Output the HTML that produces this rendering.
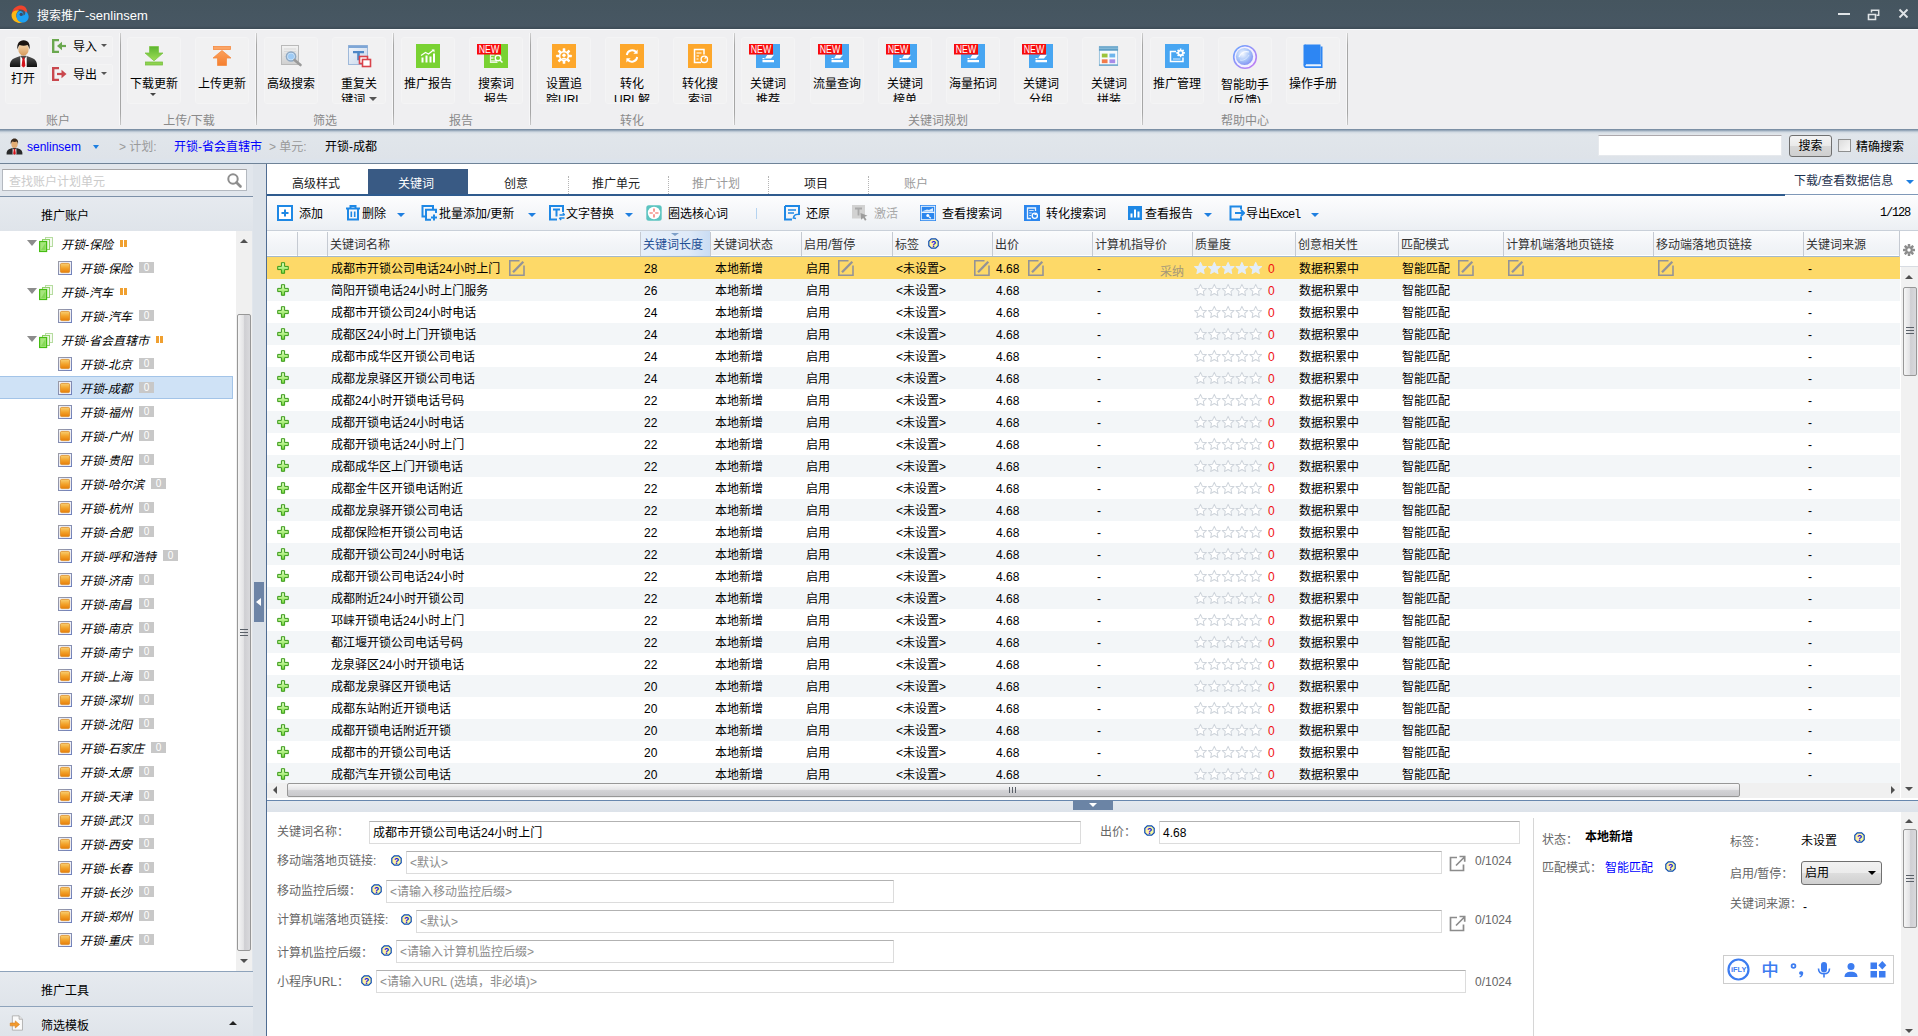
<!DOCTYPE html><html lang="zh-CN"><head><meta charset="utf-8"><title>搜索推广-senlinsem</title>
<style>html,body{margin:0;padding:0;}
body{width:1918px;height:1036px;overflow:hidden;background:#fff;
 font-family:"Liberation Sans","Noto Sans CJK SC",sans-serif;font-size:12px;color:#000;line-height:16px;}
#app{position:relative;width:1918px;height:1036px;overflow:hidden;background:#fff;}
.abs{position:absolute;}
svg{display:block;}
.nw{white-space:nowrap;}
/* title bar */
#title{position:absolute;left:0;top:0;width:1918px;height:29px;background:linear-gradient(#45555f,#475763 26px,#3f4e59 28px,#3d4c57);}
#title .t{position:absolute;left:37px;top:7px;color:#fff;font-size:12px;line-height:17px;white-space:nowrap;}
/* ribbon */
#ribbon{position:absolute;left:0;top:29px;width:1918px;height:100px;background:linear-gradient(#f9fbfc 0 1px,#efeff1 1px);}
#ribshadow{position:absolute;z-index:2;left:0;top:129px;width:1918px;height:5px;background:linear-gradient(#74889e 0,#8397ac 1px,#b4c1ce 2.2px,#d3dbe3 3.5px,#e0e5ea 5px);}
.rsep{position:absolute;top:4px;width:1px;height:92px;background:linear-gradient(#d0d0d0,#a6a6a6 12px,#a6a6a6 80px,#c8c8c8);box-shadow:-1px 0 0 #f7f7f8;}
.rgl{position:absolute;top:84px;height:16px;line-height:16px;color:#8a8a8a;font-size:12px;text-align:center;width:120px;margin-left:-60px;white-space:nowrap;}
.rb{position:absolute;top:8px;width:52px;height:65px;border:1px solid #f4f4f5;border-radius:3px;background:#f1f1f2;overflow:hidden;}
.rb .ic{position:absolute;left:0;top:0;width:54px;height:40px;}
.rb .lb{position:absolute;left:-11px;width:74px;top:38px;height:25.5px;overflow:hidden;text-align:center;font-size:12px;line-height:16px;color:#000;white-space:nowrap;}
.rs{position:absolute;left:48px;width:63px;height:19px;border:1px solid #f4f4f5;border-radius:2px;background:#f1f1f2;}
.rs span{position:absolute;left:24px;top:2px;line-height:16px;}
.dd{position:absolute;width:0;height:0;border-left:3.5px solid transparent;border-right:3.5px solid transparent;border-top:3.5px solid #444;}
/* crumb */
#crumb{position:absolute;left:0;top:132px;width:1918px;height:31px;background:linear-gradient(#e1e6eb,#dee3e9 85%,#d9e4f0);}
#crumbline{position:absolute;left:0;top:163px;width:1918px;height:1px;background:#6f8398;}
#crumb .c{position:absolute;top:7px;line-height:16px;white-space:nowrap;font-size:12px;}
/* left */
#left{position:absolute;left:0;top:164px;width:253px;height:872px;background:#e1e6ec;}
#split{position:absolute;left:253px;top:164px;width:13px;height:872px;background:#dce2e9;}
#mainborder{position:absolute;left:266px;top:164px;width:1px;height:872px;background:#4f6c92;}
.trow{position:absolute;left:0;width:236px;height:24px;}
.trow .tx{position:absolute;top:4px;line-height:16px;font-style:italic;white-space:nowrap;color:#000;}
.badge{position:absolute;width:15px;height:11px;background:#c6c6c6;color:#fff;font-size:10px;line-height:11px;text-align:center;font-style:normal;}
/* main */
#main{position:absolute;left:267px;top:164px;width:1651px;height:872px;background:#fff;}
.tab{position:absolute;top:7px;height:23px;line-height:27px;text-align:center;width:100px;font-size:12px;}
.tb{position:absolute;top:5px;line-height:16px;white-space:nowrap;font-size:12px;font-family:"Liberation Serif","Noto Serif CJK SC",serif;}
.th{position:absolute;top:0;height:25px;line-height:25px;white-space:nowrap;color:#333;}
.row{position:absolute;left:0;width:1633px;height:22px;}
.row span{position:absolute;top:1px;line-height:22px;white-space:nowrap;}
.lab{position:absolute;line-height:16px;white-space:nowrap;color:#555;}
.inp{position:absolute;height:23px;border:1px solid #dcdcdc;border-top-color:#b2b2b2;background:#fff;box-sizing:border-box;line-height:22px;padding-left:3px;white-space:nowrap;overflow:hidden;}
.ph{color:#8c8c8c;}
</style></head><body>
<div id="app">
<div id="title">
<svg class="abs" style="left:10px;top:4px" width="20" height="20" viewBox="0 0 20 20">
<path d="M2.200 12.500C1 8 3.500 3.200 8.500 1.800c4.500-1.200 8 1.200 8.600 5 .3 2-.2 3.600-1.200 4.600.2-3-1.800-5.600-5-5.800C7 5.400 4 8 2.200 12.500z" fill="#f0442c"/>
<path d="M1.800 9.500C.8 13 3 17.500 7.800 18.700c2 .5 3.800.2 5.200-.6-3.400-.2-6-2.400-6.600-5.400-.5-2.600.6-5 2.600-6.400C5.800 6 3 7.200 1.800 9.500z" fill="#fbb713"/>
<path d="M6.600 13.200c.4 3.200 3.400 5.600 7 5.200 3.400-.4 5.400-3.200 5-6.400-.3-2.400-1.600-4-3.400-4.800.6 2-.2 3.800-1.800 4.400.4-2.400-1-4.600-3.400-4.600-2.300.1-3.800 2.800-3.400 6.200z" fill="#1da1f2"/>
<circle cx="11.200" cy="10.400" r="1.700" fill="#3a4a66"/>
</svg>
<div class="t">搜索推广<span style="font-size:13px">-senlinsem</span></div>
<svg class="abs" style="left:1830px;top:5px" width="88" height="20" viewBox="0 0 88 20">
<rect x="8" y="8" width="12" height="2" fill="#e0e4e7"/>
<path d="M38.5 9.5h7v5h-7z" fill="none" stroke="#e0e4e7" stroke-width="1.6"/>
<path d="M41.5 7.5v-2.3h7.2v5h-2.2" fill="none" stroke="#e0e4e7" stroke-width="1.5"/>
<path d="M69.5 4.5l8 8M77.5 4.5l-8 8" stroke="#e0e4e7" stroke-width="1.9" fill="none"/>
</svg>
</div>
<div id="ribbon">
<div class="rb" style="left:5px;width:34px"><svg class="abs" style="left:3px;top:1px" width="29" height="29" viewBox="0 0 29 29">
<defs><linearGradient id="su" x1="0" y1="0" x2="0" y2="1"><stop offset="0" stop-color="#555"/><stop offset="1" stop-color="#111"/></linearGradient>
<linearGradient id="fa" x1="0" y1="0" x2="0" y2="1"><stop offset="0" stop-color="#f6d9b0"/><stop offset="1" stop-color="#d79a5c"/></linearGradient></defs>
<path d="M1 28c-.6-5.5 2-8.5 7.5-10l3.5-1.3h5l3.5 1.3c5.500 1.500 8.100 4.500 7.500 10z" fill="url(#su)"/>
<path d="M11.300 17l3.200 4 3.200-4v11h-6.400z" fill="#fff"/>
<path d="M13.600 18.500h1.800l1 8.500-1.900 1.500-1.900-1.500z" fill="#d3131b"/>
<ellipse cx="14.500" cy="10.300" rx="5.200" ry="6.400" fill="url(#fa)"/>
<path d="M8.600 10.500c-1.200-5.500 1.600-9.300 6-9.300 4.600 0 7 3.800 5.800 9.300-.4-2.400-1-3.600-2-4.500-2.400 1-5.600.8-7.800 0-1 .9-1.600 2.100-2 4.500z" fill="#1b1411"/>
</svg><div class="lb" style="left:-20px;top:33px">打开</div></div>
<div class="rs" style="top:7px"><svg class="abs" style="left:3px;top:2px" width="15" height="14" viewBox="0 0 15 14"><path d="M7 1H1.200v12H7" fill="none" stroke="#6aa84f" stroke-width="2.400"/><path d="M14 7H9" stroke="#6aa84f" stroke-width="2.200"/><path d="M10 2.800v8.400L5 7z" fill="#6aa84f"/></svg><span>导入</span><div class="dd" style="left:52px;top:7px;border-top-color:#555"></div></div>
<div class="rs" style="top:35px"><svg class="abs" style="left:3px;top:2px" width="15" height="14" viewBox="0 0 15 14"><path d="M7 1H1.200v12H7" fill="none" stroke="#c9474d" stroke-width="2.400"/><path d="M5 7h5" stroke="#c9474d" stroke-width="2.200"/><path d="M9.500 2.800v8.400L14.500 7z" fill="#c9474d"/></svg><span>导出</span><div class="dd" style="left:52px;top:7px;border-top-color:#555"></div></div>
<div class="rb" style="left:127px">
<svg class="abs" style="left:16px;top:7px" width="20" height="22" viewBox="0 0 20 22">
<defs><linearGradient id="gd" x1="0" y1="0" x2="0" y2="1"><stop offset="0" stop-color="#5cb531"/><stop offset="1" stop-color="#9ede55"/></linearGradient></defs>
<path d="M5.500 1.500h9v6.500h4.500l-9 7.800-9-7.800h4.500z" fill="url(#gd)" stroke="#7dc548" stroke-width=".8"/>
<rect x="1.500" y="17" width="17" height="3" fill="#8ed24f" stroke="#79c043" stroke-width=".8"/></svg>
<div class="lb" style="top:38px">下载更新</div>
<div class="dd" style="left:22px;top:55px;border-top-color:#444"></div>
</div>
<div class="rb" style="left:195px">
<svg class="abs" style="left:16px;top:7px" width="20" height="22" viewBox="0 0 20 22">
<defs><linearGradient id="gu" x1="0" y1="0" x2="0" y2="1"><stop offset="0" stop-color="#fba05d"/><stop offset="1" stop-color="#f57f2e"/></linearGradient></defs>
<rect x="1.500" y="1.500" width="17" height="3" fill="#fba566" stroke="#f58b41" stroke-width=".8"/>
<path d="M10 5.500l9 7.500h-4.500v7.500h-9v-7.500h-4.500z" fill="url(#gu)" stroke="#f58b41" stroke-width=".8"/></svg>
<div class="lb" style="top:38px">上传更新</div>
</div>
<div class="rb" style="left:264px">
<svg class="abs" style="left:14px;top:6px" width="26" height="24" viewBox="0 0 26 24">
<defs><linearGradient id="pg" x1="0" y1="0" x2="0" y2="1"><stop offset="0" stop-color="#f4f4f4"/><stop offset="1" stop-color="#cfcfcf"/></linearGradient></defs>
<rect x="2.500" y="1.500" width="17" height="19" fill="url(#pg)" stroke="#b9b9b9"/>
<path d="M5 5h12M5 7.500h12M5 10h12M5 12.500h12" stroke="#d9d9d9" stroke-width="1"/>
<circle cx="12" cy="12.500" r="4.600" fill="#cfe6fb" stroke="#8fa9c4" stroke-width="1.500"/>
<circle cx="12" cy="12.500" r="3" fill="#9ecbf5"/>
<path d="M15.500 16l6 5" stroke="#9a9a9a" stroke-width="2.600" stroke-linecap="round"/></svg>
<div class="lb" style="top:38px">高级搜索</div>
</div>
<div class="rb" style="left:332px">
<svg class="abs" style="left:14px;top:6px" width="26" height="24" viewBox="0 0 26 24">
<defs><linearGradient id="dg" x1="0" y1="0" x2="1" y2="1"><stop offset="0" stop-color="#f2f6fb"/><stop offset="1" stop-color="#c7d6ea"/></linearGradient></defs>
<rect x="1.500" y="1.500" width="19" height="19" fill="url(#dg)" stroke="#9fb9da"/>
<rect x="1.500" y="1.500" width="19" height="2.500" fill="#7ea6d6"/>
<path d="M6 7h11v2.300H12.800v7H10.200v-7H6z" fill="#4d86c6"/>
<rect x="12.500" y="12.500" width="8" height="7" fill="#fff" stroke="#d9434b" stroke-width="1.600"/>
<rect x="15.500" y="15.500" width="8" height="7" fill="#fff" stroke="#d9434b" stroke-width="1.600"/></svg>
<div class="lb" style="top:38px">重复关<br>键词&nbsp;<span style="display:inline-block;width:0;height:0;border-left:4px solid transparent;border-right:4px solid transparent;border-top:4px solid #555;vertical-align:3px"></span></div>
</div>
<div class="rb" style="left:401px">
<svg class="abs" style="left:14px;top:6px;overflow:visible" width="24" height="24" viewBox="0 0 24 24"><rect width="24" height="24" fill="#79d232"/><path d="M5.5 18.5v-5h2v5zM9.5 18.5v-7h2v7zM13.5 18.5v-6h2v6zM17 18.5v-9h2v9z" fill="#fff"/><path d="M5 11.5l4.5-3 3 1.5 5-4" stroke="#fff" stroke-width="1.2" fill="none"/><path d="M15.5 5.5h3v3z" fill="#fff"/></svg>
<div class="lb" style="top:38px">推广报告</div>
</div>
<div class="rb" style="left:469px">
<svg class="abs" style="left:14px;top:6px;overflow:visible" width="24" height="24" viewBox="0 0 24 24"><rect width="24" height="24" fill="#79d232"/><path d="M7 11h3.5M7 14h2.5M7 17h6" stroke="#e9f7dd" stroke-width="1.4"/><path d="M6.5 9.5v9h7" stroke="#e9f7dd" stroke-width="1.2" fill="none"/><circle cx="14" cy="14" r="2.8" fill="none" stroke="#fff" stroke-width="1.4"/><path d="M16 16l2.5 2.5" stroke="#fff" stroke-width="1.5"/><rect x="-7" y="0" width="24" height="10.500" fill="#f80c0c"/><text x="5" y="9.300" font-size="10" fill="#fff" text-anchor="middle" font-family="Liberation Sans, sans-serif" textLength="20.500" lengthAdjust="spacingAndGlyphs">NEW</text></svg>
<div class="lb" style="top:38px">搜索词<br>报告</div>
</div>
<div class="rb" style="left:537px">
<svg class="abs" style="left:14px;top:6px;overflow:visible" width="24" height="24" viewBox="0 0 24 24"><rect width="24" height="24" fill="#fda72b"/><g fill="#fff"><circle cx="12" cy="12" r="5.2"/><g id="t"><rect x="10.7" y="4.2" width="2.6" height="3.2" rx=".6"/><rect x="10.7" y="16.6" width="2.6" height="3.2" rx=".6"/></g><use href="#t" transform="rotate(45 12 12)"/><use href="#t" transform="rotate(90 12 12)"/><use href="#t" transform="rotate(135 12 12)"/></g><circle cx="12" cy="12" r="3.6" fill="#fda72b"/><circle cx="12" cy="11.3" r="1.7" fill="#fff"/><path d="M9.2 15.3c.6-2 5-2 5.6 0z" fill="#fff"/></svg>
<div class="lb" style="top:38px">设置追<br>踪URL</div>
</div>
<div class="rb" style="left:605px">
<svg class="abs" style="left:14px;top:6px;overflow:visible" width="24" height="24" viewBox="0 0 24 24"><rect width="24" height="24" fill="#fda72b"/><path d="M6.8 11a5.4 5.4 0 0 1 9.6-2.6" fill="none" stroke="#fff" stroke-width="1.9"/><path d="M17.6 5.6v4.2h-4.2z" fill="#fff"/><path d="M17.2 13a5.4 5.4 0 0 1-9.6 2.6" fill="none" stroke="#fff" stroke-width="1.9"/><path d="M6.4 18.4v-4.2h4.2z" fill="#fff"/></svg>
<div class="lb" style="top:38px">转化<br>URL解</div>
</div>
<div class="rb" style="left:673px">
<svg class="abs" style="left:14px;top:6px;overflow:visible" width="24" height="24" viewBox="0 0 24 24"><rect width="24" height="24" fill="#fda72b"/><path d="M13 18.5H6.5v-13h9.5v5" fill="none" stroke="#fff" stroke-width="1.5"/><path d="M8.5 9h5M8.5 12h2.5M8.5 15h2" stroke="#ffe6bf" stroke-width="1.3"/><circle cx="16.3" cy="15.3" r="3.2" fill="none" stroke="#fff" stroke-width="1.4"/><path d="M18.3 12.2v2.4h-2.4z" fill="#fff"/></svg>
<div class="lb" style="top:38px">转化搜<br>索词</div>
</div>
<div class="rb" style="left:741px">
<svg class="abs" style="left:14px;top:6px;overflow:visible" width="24" height="24" viewBox="0 0 24 24"><rect width="24" height="24" fill="#48a6f2"/><path d="M6.5 18.3h11.5v-2.2H6.5z" fill="#fff"/><path d="M9 14.6l2.2-3.6 6.8-.3-3 3.9z" fill="#fff"/><path d="M6.5 14.6h2" stroke="#fff" stroke-width="1.2"/><rect x="-7" y="0" width="24" height="10.500" fill="#f80c0c"/><text x="5" y="9.300" font-size="10" fill="#fff" text-anchor="middle" font-family="Liberation Sans, sans-serif" textLength="20.500" lengthAdjust="spacingAndGlyphs">NEW</text></svg>
<div class="lb" style="top:38px">关键词<br>推荐</div>
</div>
<div class="rb" style="left:810px">
<svg class="abs" style="left:14px;top:6px;overflow:visible" width="24" height="24" viewBox="0 0 24 24"><rect width="24" height="24" fill="#48a6f2"/><path d="M6.5 18.3h11.5v-2.2H6.5z" fill="#fff"/><path d="M9 14.6l2.2-3.6 6.8-.3-3 3.9z" fill="#fff"/><path d="M6.5 14.6h2" stroke="#fff" stroke-width="1.2"/><rect x="-7" y="0" width="24" height="10.500" fill="#f80c0c"/><text x="5" y="9.300" font-size="10" fill="#fff" text-anchor="middle" font-family="Liberation Sans, sans-serif" textLength="20.500" lengthAdjust="spacingAndGlyphs">NEW</text></svg>
<div class="lb" style="top:38px">流量查询</div>
</div>
<div class="rb" style="left:878px">
<svg class="abs" style="left:14px;top:6px;overflow:visible" width="24" height="24" viewBox="0 0 24 24"><rect width="24" height="24" fill="#48a6f2"/><path d="M6.5 18.3h11.5v-2.2H6.5z" fill="#fff"/><path d="M9 14.6l2.2-3.6 6.8-.3-3 3.9z" fill="#fff"/><path d="M6.5 14.6h2" stroke="#fff" stroke-width="1.2"/><rect x="-7" y="0" width="24" height="10.500" fill="#f80c0c"/><text x="5" y="9.300" font-size="10" fill="#fff" text-anchor="middle" font-family="Liberation Sans, sans-serif" textLength="20.500" lengthAdjust="spacingAndGlyphs">NEW</text></svg>
<div class="lb" style="top:38px">关键词<br>榜单</div>
</div>
<div class="rb" style="left:946px">
<svg class="abs" style="left:14px;top:6px;overflow:visible" width="24" height="24" viewBox="0 0 24 24"><rect width="24" height="24" fill="#48a6f2"/><path d="M6.5 18.3h11.5v-2.2H6.5z" fill="#fff"/><path d="M9 14.6l2.2-3.6 6.8-.3-3 3.9z" fill="#fff"/><path d="M6.5 14.6h2" stroke="#fff" stroke-width="1.2"/><rect x="-7" y="0" width="24" height="10.500" fill="#f80c0c"/><text x="5" y="9.300" font-size="10" fill="#fff" text-anchor="middle" font-family="Liberation Sans, sans-serif" textLength="20.500" lengthAdjust="spacingAndGlyphs">NEW</text></svg>
<div class="lb" style="top:38px">海量拓词</div>
</div>
<div class="rb" style="left:1014px">
<svg class="abs" style="left:14px;top:6px;overflow:visible" width="24" height="24" viewBox="0 0 24 24"><rect width="24" height="24" fill="#48a6f2"/><path d="M6.5 18.3h11.5v-2.2H6.5z" fill="#fff"/><path d="M9 14.6l2.2-3.6 6.8-.3-3 3.9z" fill="#fff"/><path d="M6.5 14.6h2" stroke="#fff" stroke-width="1.2"/><rect x="-7" y="0" width="24" height="10.500" fill="#f80c0c"/><text x="5" y="9.300" font-size="10" fill="#fff" text-anchor="middle" font-family="Liberation Sans, sans-serif" textLength="20.500" lengthAdjust="spacingAndGlyphs">NEW</text></svg>
<div class="lb" style="top:38px">关键词<br>分组</div>
</div>
<div class="rb" style="left:1082px">
<svg class="abs" style="left:15px;top:7px" width="21" height="22" viewBox="0 0 22 22">
<rect x="1.500" y="1" width="19" height="19.500" fill="#f7fafc" stroke="#9cc3dc"/>
<rect x="1" y="1" width="20" height="4.500" fill="#5f9fc6"/><rect x="1" y="2.200" width="20" height="1.200" fill="#8fc0dd"/>
<rect x="4" y="8.500" width="6" height="4" fill="#9bc33b"/><rect x="12" y="8.500" width="6" height="4" fill="#6fb5ec"/>
<rect x="4" y="14.500" width="6" height="4" fill="#f37c4a"/><rect x="12" y="14.500" width="6" height="4" fill="#a78be8"/>
<path d="M1 20.500h20" stroke="#5f9fc6" stroke-width="1.400"/></svg>
<div class="lb" style="top:38px">关键词<br>拼装</div>
</div>
<div class="rb" style="left:1150px">
<svg class="abs" style="left:14px;top:6px;overflow:visible" width="24" height="24" viewBox="0 0 24 24"><rect width="24" height="24" fill="#48a6f2"/><path d="M11 7.5H5.5v10h12.5v-4" fill="none" stroke="#fff" stroke-width="1.5"/><path d="M8 15h7.5" stroke="#d8ecfd" stroke-width="1.2"/><circle cx="15.6" cy="8.9" r="3.1" fill="#fff"/><g stroke="#fff" stroke-width="1.6"><path d="M15.6 4.6v8.6M11.3 8.9h8.6M12.6 5.9l6 6M18.6 5.9l-6 6"/></g><circle cx="15.6" cy="8.9" r="1.4" fill="#48a6f2"/></svg>
<div class="lb" style="top:38px">推广管理</div>
</div>
<div class="rb" style="left:1218px">
<svg class="abs" style="left:13px;top:6px" width="26" height="26" viewBox="0 0 26 26">
<defs><radialGradient id="ag" cx=".4" cy=".35" r=".7"><stop offset="0" stop-color="#f4f8ff"/><stop offset=".55" stop-color="#a9c6f8"/><stop offset="1" stop-color="#7f8df2"/></radialGradient>
<linearGradient id="ar" x1="0" y1="0" x2="1" y2="1"><stop offset="0" stop-color="#6aa8ff"/><stop offset="1" stop-color="#c77bf2"/></linearGradient></defs>
<circle cx="13" cy="13" r="11.300" fill="#f3f0ff" stroke="url(#ar)" stroke-width="1.600"/>
<circle cx="12.500" cy="12.500" r="8.600" fill="url(#ag)"/>
<path d="M7 13c2-4 6-6 10-5" stroke="#fff" stroke-width="1.200" fill="none" opacity=".8"/>
<path d="M8 16c3 1 7-1 9-5" stroke="#dfeaff" stroke-width="1" fill="none" opacity=".8"/></svg>
<div class="lb" style="top:39px">智能助手<br>(反馈)</div>
</div>
<div class="rb" style="left:1286px">
<svg class="abs" style="left:15px;top:6px" width="22" height="25" viewBox="0 0 22 25">
<path d="M3 .5h15.500v19H3z" fill="#2d86f3"/><path d="M18.500 2.500h2v21.500H4.500c-2 0-3-1.200-3-2.600s1-2.400 3-2.400H18.500z" fill="#2d86f3"/>
<path d="M4.500 20.200h14.500v2H4.500c-.8 0-1.300-.4-1.300-1s.5-1 1.300-1z" fill="#e8f2ff"/>
<rect x="1.500" y=".5" width="2.500" height="21" rx="1" fill="#2d86f3"/></svg>
<div class="lb" style="top:38px">操作手册</div>
</div>
<div class="rsep" style="left:120px"></div>
<div class="rsep" style="left:256px"></div>
<div class="rsep" style="left:393px"></div>
<div class="rsep" style="left:530px"></div>
<div class="rsep" style="left:734px"></div>
<div class="rsep" style="left:1142px"></div>
<div class="rsep" style="left:1347px"></div>
<div class="rgl" style="left:58px">账户</div>
<div class="rgl" style="left:189px">上传/下载</div>
<div class="rgl" style="left:325px">筛选</div>
<div class="rgl" style="left:461px">报告</div>
<div class="rgl" style="left:632px">转化</div>
<div class="rgl" style="left:938px">关键词规划</div>
<div class="rgl" style="left:1245px">帮助中心</div>
</div><div id="ribshadow"></div>
<div id="crumb">
<svg class="abs" style="left:6px;top:6px" width="17" height="17" viewBox="0 0 29 29">
<path d="M1 28c-.6-5.500 2-8.500 7.500-10l3.500-1.300h5l3.500 1.300c5.500 1.500 8.100 4.500 7.500 10z" fill="#2a2a2a"/>
<path d="M11.300 17l3.200 4 3.200-4v11h-6.400z" fill="#fff"/><path d="M13.400 18.500h2.200l1.200 8.500-2.300 1.500-2.300-1.500z" fill="#d3131b"/>
<ellipse cx="14.500" cy="10.300" rx="5.400" ry="6.600" fill="#e3ad74"/>
<path d="M8.400 10.500c-1.200-5.500 1.600-9.500 6.100-9.500 4.700 0 7.100 4 5.900 9.500-.4-2.400-1-3.600-2-4.500-2.400 1-5.600.8-7.800 0-1 .9-1.600 2.100-2.200 4.500z" fill="#3b2a1c"/></svg>
<div class="c" style="left:27px;color:#0000ff">senlinsem</div>
<div class="dd" style="left:93px;top:13px;border-top-color:#1e7fe0;border-left-width:3.500px;border-right-width:3.500px;border-top-width:4px"></div>
<div class="c" style="left:119px;color:#9a9a9a">&gt; 计划:</div>
<div class="c" style="left:174px;color:#0000ff">开锁-省会直辖市</div>
<div class="c" style="left:269px;color:#9a9a9a">&gt; 单元:</div>
<div class="c" style="left:325px;color:#000">开锁-成都</div>
<div class="abs" style="left:1598px;top:3px;width:184px;height:21px;background:#fff;border:1px solid #e6e9ed;border-top-color:#aca8ac;box-sizing:border-box"></div>
<div class="abs" style="left:1789px;top:3px;width:43px;height:22px;box-sizing:border-box;border:1px solid #707070;border-radius:3px;background:linear-gradient(#f4f4f4,#e9e9e9 50%,#d8d8d8 51%,#cfcfcf);text-align:center;line-height:21px">搜索</div>
<div class="abs" style="left:1838px;top:7px;width:13px;height:13px;box-sizing:border-box;border:1px solid #8e8f8f;background:linear-gradient(135deg,#dcdcdc,#f8f8f8)"></div>
<div class="c" style="left:1856px;color:#000">精确搜索</div>
</div><div id="crumbline"></div>
<div id="left">
<div class="abs" style="left:2px;top:5px;width:245px;height:22px;box-sizing:border-box;background:#fff;border:1px solid #b4b9c0;border-top-color:#a6a6a8"></div>
<div class="abs nw" style="left:9px;top:10px;color:#cbcbcb;line-height:16px">查找账户计划单元</div>
<svg class="abs" style="left:226px;top:8px" width="17" height="17" viewBox="0 0 17 17"><circle cx="7" cy="7" r="4.700" fill="none" stroke="#8e8e8e" stroke-width="2"/><path d="M10.500 10.500l4 4" stroke="#8e8e8e" stroke-width="2.600" stroke-linecap="round"/></svg>
<div class="abs" style="left:0;top:32px;width:253px;height:1px;background:#7c90a8"></div>
<div class="abs" style="left:0;top:33px;width:253px;height:34px;background:linear-gradient(#e6eaef,#dfe4ea)"></div>
<div class="abs nw" style="left:41px;top:44px;line-height:16px;color:#000">推广账户</div>
<div class="abs" style="left:0;top:67px;width:252px;height:740px;background:#fff;overflow:hidden">
<div class="abs" style="left:27px;top:9px;width:0;height:0;border-left:5px solid transparent;border-right:5px solid transparent;border-top:6px solid #8c8c8c"></div>
<svg class="abs" style="left:39px;top:6px" width="15" height="16" viewBox="0 0 15 16"><rect x="6.500" y=".5" width="7" height="9" fill="#f4fbef" stroke="#b6dca0"/><rect x="3.500" y="2.500" width="7" height="10" fill="#eaf7e0" stroke="#8fd068"/><rect x=".6" y="4.500" width="7" height="10" fill="#a5e57c" stroke="#45bd12" stroke-width="1.200"/><path d="M2 13l4.500-7v7z" fill="#86d958"/></svg>
<div class="abs nw" style="left:61px;top:6px;line-height:16px"><i>开锁-保险</i><span style="display:inline-block;width:3px;height:7px;background:#f0a030;margin-left:7px;vertical-align:2px"></span><span style="display:inline-block;width:3px;height:7px;background:#f0a030;margin-left:1px;vertical-align:2px"></span></div>
<svg class="abs" style="left:58px;top:30px" width="14" height="14" viewBox="0 0 14 14"><defs><linearGradient id="ug" x1="0" y1="0" x2="0" y2="1"><stop offset="0" stop-color="#f9d074"/><stop offset=".5" stop-color="#f3a42c"/><stop offset="1" stop-color="#e67e0a"/></linearGradient><linearGradient id="ub" x1="0" y1="0" x2="1" y2="1"><stop offset="0" stop-color="#9c9ca6"/><stop offset="1" stop-color="#6f80bd"/></linearGradient></defs><rect x=".5" y=".5" width="13" height="13" fill="#eef1fa" stroke="url(#ub)"/><rect x="2.400" y="2.400" width="9.200" height="9.200" rx="1.300" fill="url(#ug)" stroke="#dd8a20" stroke-width=".8"/></svg>
<div class="abs nw" style="left:80px;top:30px;line-height:16px"><i>开锁-保险</i><span style="display:inline-block;width:15px;height:11px;background:#c8c8c8;color:#fff;font-size:10px;line-height:11px;text-align:center;margin-left:7px;vertical-align:2px">0</span></div>
<div class="abs" style="left:27px;top:57px;width:0;height:0;border-left:5px solid transparent;border-right:5px solid transparent;border-top:6px solid #8c8c8c"></div>
<svg class="abs" style="left:39px;top:54px" width="15" height="16" viewBox="0 0 15 16"><rect x="6.500" y=".5" width="7" height="9" fill="#f4fbef" stroke="#b6dca0"/><rect x="3.500" y="2.500" width="7" height="10" fill="#eaf7e0" stroke="#8fd068"/><rect x=".6" y="4.500" width="7" height="10" fill="#a5e57c" stroke="#45bd12" stroke-width="1.200"/><path d="M2 13l4.500-7v7z" fill="#86d958"/></svg>
<div class="abs nw" style="left:61px;top:54px;line-height:16px"><i>开锁-汽车</i><span style="display:inline-block;width:3px;height:7px;background:#f0a030;margin-left:7px;vertical-align:2px"></span><span style="display:inline-block;width:3px;height:7px;background:#f0a030;margin-left:1px;vertical-align:2px"></span></div>
<svg class="abs" style="left:58px;top:78px" width="14" height="14" viewBox="0 0 14 14"><rect x=".5" y=".5" width="13" height="13" fill="#eef1fa" stroke="url(#ub)"/><rect x="2.400" y="2.400" width="9.200" height="9.200" rx="1.300" fill="url(#ug)" stroke="#dd8a20" stroke-width=".8"/></svg>
<div class="abs nw" style="left:80px;top:78px;line-height:16px"><i>开锁-汽车</i><span style="display:inline-block;width:15px;height:11px;background:#c8c8c8;color:#fff;font-size:10px;line-height:11px;text-align:center;margin-left:7px;vertical-align:2px">0</span></div>
<div class="abs" style="left:27px;top:105px;width:0;height:0;border-left:5px solid transparent;border-right:5px solid transparent;border-top:6px solid #8c8c8c"></div>
<svg class="abs" style="left:39px;top:102px" width="15" height="16" viewBox="0 0 15 16"><rect x="6.500" y=".5" width="7" height="9" fill="#f4fbef" stroke="#b6dca0"/><rect x="3.500" y="2.500" width="7" height="10" fill="#eaf7e0" stroke="#8fd068"/><rect x=".6" y="4.500" width="7" height="10" fill="#a5e57c" stroke="#45bd12" stroke-width="1.200"/><path d="M2 13l4.500-7v7z" fill="#86d958"/></svg>
<div class="abs nw" style="left:61px;top:102px;line-height:16px"><i>开锁-省会直辖市</i><span style="display:inline-block;width:3px;height:7px;background:#f0a030;margin-left:7px;vertical-align:2px"></span><span style="display:inline-block;width:3px;height:7px;background:#f0a030;margin-left:1px;vertical-align:2px"></span></div>
<svg class="abs" style="left:58px;top:126px" width="14" height="14" viewBox="0 0 14 14"><rect x=".5" y=".5" width="13" height="13" fill="#eef1fa" stroke="url(#ub)"/><rect x="2.400" y="2.400" width="9.200" height="9.200" rx="1.300" fill="url(#ug)" stroke="#dd8a20" stroke-width=".8"/></svg>
<div class="abs nw" style="left:80px;top:126px;line-height:16px"><i>开锁-北京</i><span style="display:inline-block;width:15px;height:11px;background:#c8c8c8;color:#fff;font-size:10px;line-height:11px;text-align:center;margin-left:7px;vertical-align:2px">0</span></div>
<div class="abs" style="left:0;top:145px;width:233px;height:23px;box-sizing:border-box;background:#cfe2f6;border:1px solid #a3c4e8;border-left:none"></div>
<svg class="abs" style="left:58px;top:150px" width="14" height="14" viewBox="0 0 14 14"><rect x=".5" y=".5" width="13" height="13" fill="#eef1fa" stroke="url(#ub)"/><rect x="2.400" y="2.400" width="9.200" height="9.200" rx="1.300" fill="url(#ug)" stroke="#dd8a20" stroke-width=".8"/></svg>
<div class="abs nw" style="left:80px;top:150px;line-height:16px"><i>开锁-成都</i><span style="display:inline-block;width:15px;height:11px;background:#c8c8c8;color:#fff;font-size:10px;line-height:11px;text-align:center;margin-left:7px;vertical-align:2px">0</span></div>
<svg class="abs" style="left:58px;top:174px" width="14" height="14" viewBox="0 0 14 14"><rect x=".5" y=".5" width="13" height="13" fill="#eef1fa" stroke="url(#ub)"/><rect x="2.400" y="2.400" width="9.200" height="9.200" rx="1.300" fill="url(#ug)" stroke="#dd8a20" stroke-width=".8"/></svg>
<div class="abs nw" style="left:80px;top:174px;line-height:16px"><i>开锁-福州</i><span style="display:inline-block;width:15px;height:11px;background:#c8c8c8;color:#fff;font-size:10px;line-height:11px;text-align:center;margin-left:7px;vertical-align:2px">0</span></div>
<svg class="abs" style="left:58px;top:198px" width="14" height="14" viewBox="0 0 14 14"><rect x=".5" y=".5" width="13" height="13" fill="#eef1fa" stroke="url(#ub)"/><rect x="2.400" y="2.400" width="9.200" height="9.200" rx="1.300" fill="url(#ug)" stroke="#dd8a20" stroke-width=".8"/></svg>
<div class="abs nw" style="left:80px;top:198px;line-height:16px"><i>开锁-广州</i><span style="display:inline-block;width:15px;height:11px;background:#c8c8c8;color:#fff;font-size:10px;line-height:11px;text-align:center;margin-left:7px;vertical-align:2px">0</span></div>
<svg class="abs" style="left:58px;top:222px" width="14" height="14" viewBox="0 0 14 14"><rect x=".5" y=".5" width="13" height="13" fill="#eef1fa" stroke="url(#ub)"/><rect x="2.400" y="2.400" width="9.200" height="9.200" rx="1.300" fill="url(#ug)" stroke="#dd8a20" stroke-width=".8"/></svg>
<div class="abs nw" style="left:80px;top:222px;line-height:16px"><i>开锁-贵阳</i><span style="display:inline-block;width:15px;height:11px;background:#c8c8c8;color:#fff;font-size:10px;line-height:11px;text-align:center;margin-left:7px;vertical-align:2px">0</span></div>
<svg class="abs" style="left:58px;top:246px" width="14" height="14" viewBox="0 0 14 14"><rect x=".5" y=".5" width="13" height="13" fill="#eef1fa" stroke="url(#ub)"/><rect x="2.400" y="2.400" width="9.200" height="9.200" rx="1.300" fill="url(#ug)" stroke="#dd8a20" stroke-width=".8"/></svg>
<div class="abs nw" style="left:80px;top:246px;line-height:16px"><i>开锁-哈尔滨</i><span style="display:inline-block;width:15px;height:11px;background:#c8c8c8;color:#fff;font-size:10px;line-height:11px;text-align:center;margin-left:7px;vertical-align:2px">0</span></div>
<svg class="abs" style="left:58px;top:270px" width="14" height="14" viewBox="0 0 14 14"><rect x=".5" y=".5" width="13" height="13" fill="#eef1fa" stroke="url(#ub)"/><rect x="2.400" y="2.400" width="9.200" height="9.200" rx="1.300" fill="url(#ug)" stroke="#dd8a20" stroke-width=".8"/></svg>
<div class="abs nw" style="left:80px;top:270px;line-height:16px"><i>开锁-杭州</i><span style="display:inline-block;width:15px;height:11px;background:#c8c8c8;color:#fff;font-size:10px;line-height:11px;text-align:center;margin-left:7px;vertical-align:2px">0</span></div>
<svg class="abs" style="left:58px;top:294px" width="14" height="14" viewBox="0 0 14 14"><rect x=".5" y=".5" width="13" height="13" fill="#eef1fa" stroke="url(#ub)"/><rect x="2.400" y="2.400" width="9.200" height="9.200" rx="1.300" fill="url(#ug)" stroke="#dd8a20" stroke-width=".8"/></svg>
<div class="abs nw" style="left:80px;top:294px;line-height:16px"><i>开锁-合肥</i><span style="display:inline-block;width:15px;height:11px;background:#c8c8c8;color:#fff;font-size:10px;line-height:11px;text-align:center;margin-left:7px;vertical-align:2px">0</span></div>
<svg class="abs" style="left:58px;top:318px" width="14" height="14" viewBox="0 0 14 14"><rect x=".5" y=".5" width="13" height="13" fill="#eef1fa" stroke="url(#ub)"/><rect x="2.400" y="2.400" width="9.200" height="9.200" rx="1.300" fill="url(#ug)" stroke="#dd8a20" stroke-width=".8"/></svg>
<div class="abs nw" style="left:80px;top:318px;line-height:16px"><i>开锁-呼和浩特</i><span style="display:inline-block;width:15px;height:11px;background:#c8c8c8;color:#fff;font-size:10px;line-height:11px;text-align:center;margin-left:7px;vertical-align:2px">0</span></div>
<svg class="abs" style="left:58px;top:342px" width="14" height="14" viewBox="0 0 14 14"><rect x=".5" y=".5" width="13" height="13" fill="#eef1fa" stroke="url(#ub)"/><rect x="2.400" y="2.400" width="9.200" height="9.200" rx="1.300" fill="url(#ug)" stroke="#dd8a20" stroke-width=".8"/></svg>
<div class="abs nw" style="left:80px;top:342px;line-height:16px"><i>开锁-济南</i><span style="display:inline-block;width:15px;height:11px;background:#c8c8c8;color:#fff;font-size:10px;line-height:11px;text-align:center;margin-left:7px;vertical-align:2px">0</span></div>
<svg class="abs" style="left:58px;top:366px" width="14" height="14" viewBox="0 0 14 14"><rect x=".5" y=".5" width="13" height="13" fill="#eef1fa" stroke="url(#ub)"/><rect x="2.400" y="2.400" width="9.200" height="9.200" rx="1.300" fill="url(#ug)" stroke="#dd8a20" stroke-width=".8"/></svg>
<div class="abs nw" style="left:80px;top:366px;line-height:16px"><i>开锁-南昌</i><span style="display:inline-block;width:15px;height:11px;background:#c8c8c8;color:#fff;font-size:10px;line-height:11px;text-align:center;margin-left:7px;vertical-align:2px">0</span></div>
<svg class="abs" style="left:58px;top:390px" width="14" height="14" viewBox="0 0 14 14"><rect x=".5" y=".5" width="13" height="13" fill="#eef1fa" stroke="url(#ub)"/><rect x="2.400" y="2.400" width="9.200" height="9.200" rx="1.300" fill="url(#ug)" stroke="#dd8a20" stroke-width=".8"/></svg>
<div class="abs nw" style="left:80px;top:390px;line-height:16px"><i>开锁-南京</i><span style="display:inline-block;width:15px;height:11px;background:#c8c8c8;color:#fff;font-size:10px;line-height:11px;text-align:center;margin-left:7px;vertical-align:2px">0</span></div>
<svg class="abs" style="left:58px;top:414px" width="14" height="14" viewBox="0 0 14 14"><rect x=".5" y=".5" width="13" height="13" fill="#eef1fa" stroke="url(#ub)"/><rect x="2.400" y="2.400" width="9.200" height="9.200" rx="1.300" fill="url(#ug)" stroke="#dd8a20" stroke-width=".8"/></svg>
<div class="abs nw" style="left:80px;top:414px;line-height:16px"><i>开锁-南宁</i><span style="display:inline-block;width:15px;height:11px;background:#c8c8c8;color:#fff;font-size:10px;line-height:11px;text-align:center;margin-left:7px;vertical-align:2px">0</span></div>
<svg class="abs" style="left:58px;top:438px" width="14" height="14" viewBox="0 0 14 14"><rect x=".5" y=".5" width="13" height="13" fill="#eef1fa" stroke="url(#ub)"/><rect x="2.400" y="2.400" width="9.200" height="9.200" rx="1.300" fill="url(#ug)" stroke="#dd8a20" stroke-width=".8"/></svg>
<div class="abs nw" style="left:80px;top:438px;line-height:16px"><i>开锁-上海</i><span style="display:inline-block;width:15px;height:11px;background:#c8c8c8;color:#fff;font-size:10px;line-height:11px;text-align:center;margin-left:7px;vertical-align:2px">0</span></div>
<svg class="abs" style="left:58px;top:462px" width="14" height="14" viewBox="0 0 14 14"><rect x=".5" y=".5" width="13" height="13" fill="#eef1fa" stroke="url(#ub)"/><rect x="2.400" y="2.400" width="9.200" height="9.200" rx="1.300" fill="url(#ug)" stroke="#dd8a20" stroke-width=".8"/></svg>
<div class="abs nw" style="left:80px;top:462px;line-height:16px"><i>开锁-深圳</i><span style="display:inline-block;width:15px;height:11px;background:#c8c8c8;color:#fff;font-size:10px;line-height:11px;text-align:center;margin-left:7px;vertical-align:2px">0</span></div>
<svg class="abs" style="left:58px;top:486px" width="14" height="14" viewBox="0 0 14 14"><rect x=".5" y=".5" width="13" height="13" fill="#eef1fa" stroke="url(#ub)"/><rect x="2.400" y="2.400" width="9.200" height="9.200" rx="1.300" fill="url(#ug)" stroke="#dd8a20" stroke-width=".8"/></svg>
<div class="abs nw" style="left:80px;top:486px;line-height:16px"><i>开锁-沈阳</i><span style="display:inline-block;width:15px;height:11px;background:#c8c8c8;color:#fff;font-size:10px;line-height:11px;text-align:center;margin-left:7px;vertical-align:2px">0</span></div>
<svg class="abs" style="left:58px;top:510px" width="14" height="14" viewBox="0 0 14 14"><rect x=".5" y=".5" width="13" height="13" fill="#eef1fa" stroke="url(#ub)"/><rect x="2.400" y="2.400" width="9.200" height="9.200" rx="1.300" fill="url(#ug)" stroke="#dd8a20" stroke-width=".8"/></svg>
<div class="abs nw" style="left:80px;top:510px;line-height:16px"><i>开锁-石家庄</i><span style="display:inline-block;width:15px;height:11px;background:#c8c8c8;color:#fff;font-size:10px;line-height:11px;text-align:center;margin-left:7px;vertical-align:2px">0</span></div>
<svg class="abs" style="left:58px;top:534px" width="14" height="14" viewBox="0 0 14 14"><rect x=".5" y=".5" width="13" height="13" fill="#eef1fa" stroke="url(#ub)"/><rect x="2.400" y="2.400" width="9.200" height="9.200" rx="1.300" fill="url(#ug)" stroke="#dd8a20" stroke-width=".8"/></svg>
<div class="abs nw" style="left:80px;top:534px;line-height:16px"><i>开锁-太原</i><span style="display:inline-block;width:15px;height:11px;background:#c8c8c8;color:#fff;font-size:10px;line-height:11px;text-align:center;margin-left:7px;vertical-align:2px">0</span></div>
<svg class="abs" style="left:58px;top:558px" width="14" height="14" viewBox="0 0 14 14"><rect x=".5" y=".5" width="13" height="13" fill="#eef1fa" stroke="url(#ub)"/><rect x="2.400" y="2.400" width="9.200" height="9.200" rx="1.300" fill="url(#ug)" stroke="#dd8a20" stroke-width=".8"/></svg>
<div class="abs nw" style="left:80px;top:558px;line-height:16px"><i>开锁-天津</i><span style="display:inline-block;width:15px;height:11px;background:#c8c8c8;color:#fff;font-size:10px;line-height:11px;text-align:center;margin-left:7px;vertical-align:2px">0</span></div>
<svg class="abs" style="left:58px;top:582px" width="14" height="14" viewBox="0 0 14 14"><rect x=".5" y=".5" width="13" height="13" fill="#eef1fa" stroke="url(#ub)"/><rect x="2.400" y="2.400" width="9.200" height="9.200" rx="1.300" fill="url(#ug)" stroke="#dd8a20" stroke-width=".8"/></svg>
<div class="abs nw" style="left:80px;top:582px;line-height:16px"><i>开锁-武汉</i><span style="display:inline-block;width:15px;height:11px;background:#c8c8c8;color:#fff;font-size:10px;line-height:11px;text-align:center;margin-left:7px;vertical-align:2px">0</span></div>
<svg class="abs" style="left:58px;top:606px" width="14" height="14" viewBox="0 0 14 14"><rect x=".5" y=".5" width="13" height="13" fill="#eef1fa" stroke="url(#ub)"/><rect x="2.400" y="2.400" width="9.200" height="9.200" rx="1.300" fill="url(#ug)" stroke="#dd8a20" stroke-width=".8"/></svg>
<div class="abs nw" style="left:80px;top:606px;line-height:16px"><i>开锁-西安</i><span style="display:inline-block;width:15px;height:11px;background:#c8c8c8;color:#fff;font-size:10px;line-height:11px;text-align:center;margin-left:7px;vertical-align:2px">0</span></div>
<svg class="abs" style="left:58px;top:630px" width="14" height="14" viewBox="0 0 14 14"><rect x=".5" y=".5" width="13" height="13" fill="#eef1fa" stroke="url(#ub)"/><rect x="2.400" y="2.400" width="9.200" height="9.200" rx="1.300" fill="url(#ug)" stroke="#dd8a20" stroke-width=".8"/></svg>
<div class="abs nw" style="left:80px;top:630px;line-height:16px"><i>开锁-长春</i><span style="display:inline-block;width:15px;height:11px;background:#c8c8c8;color:#fff;font-size:10px;line-height:11px;text-align:center;margin-left:7px;vertical-align:2px">0</span></div>
<svg class="abs" style="left:58px;top:654px" width="14" height="14" viewBox="0 0 14 14"><rect x=".5" y=".5" width="13" height="13" fill="#eef1fa" stroke="url(#ub)"/><rect x="2.400" y="2.400" width="9.200" height="9.200" rx="1.300" fill="url(#ug)" stroke="#dd8a20" stroke-width=".8"/></svg>
<div class="abs nw" style="left:80px;top:654px;line-height:16px"><i>开锁-长沙</i><span style="display:inline-block;width:15px;height:11px;background:#c8c8c8;color:#fff;font-size:10px;line-height:11px;text-align:center;margin-left:7px;vertical-align:2px">0</span></div>
<svg class="abs" style="left:58px;top:678px" width="14" height="14" viewBox="0 0 14 14"><rect x=".5" y=".5" width="13" height="13" fill="#eef1fa" stroke="url(#ub)"/><rect x="2.400" y="2.400" width="9.200" height="9.200" rx="1.300" fill="url(#ug)" stroke="#dd8a20" stroke-width=".8"/></svg>
<div class="abs nw" style="left:80px;top:678px;line-height:16px"><i>开锁-郑州</i><span style="display:inline-block;width:15px;height:11px;background:#c8c8c8;color:#fff;font-size:10px;line-height:11px;text-align:center;margin-left:7px;vertical-align:2px">0</span></div>
<svg class="abs" style="left:58px;top:702px" width="14" height="14" viewBox="0 0 14 14"><rect x=".5" y=".5" width="13" height="13" fill="#eef1fa" stroke="url(#ub)"/><rect x="2.400" y="2.400" width="9.200" height="9.200" rx="1.300" fill="url(#ug)" stroke="#dd8a20" stroke-width=".8"/></svg>
<div class="abs nw" style="left:80px;top:702px;line-height:16px"><i>开锁-重庆</i><span style="display:inline-block;width:15px;height:11px;background:#c8c8c8;color:#fff;font-size:10px;line-height:11px;text-align:center;margin-left:7px;vertical-align:2px">0</span></div>
<div class="abs" style="left:236px;top:0;width:16px;height:740px;background:#f0f0f0"></div>
<div class="abs" style="left:240px;top:8px;width:0;height:0;border-left:4px solid transparent;border-right:4px solid transparent;border-bottom:4px solid #505050"></div>
<div class="abs" style="left:240px;top:728px;width:0;height:0;border-left:4px solid transparent;border-right:4px solid transparent;border-top:4px solid #505050"></div>
<div class="abs" style="left:237px;top:83px;width:14px;height:637px;box-sizing:border-box;border:1px solid #979797;border-radius:2px;background:linear-gradient(90deg,#f5f5f5,#e4e4e6 45%,#cfcfd3 55%,#d9d9dc)"></div>
<div class="abs" style="left:240px;top:398px;width:8px;height:7px;background:repeating-linear-gradient(#5a6068 0 1px,transparent 1px 3px)"></div>
</div>
<div class="abs" style="left:0;top:807px;width:253px;height:1px;background:#8ea3bb"></div>
<div class="abs" style="left:0;top:808px;width:253px;height:34px;background:linear-gradient(#e6eaef,#dfe4ea)"></div>
<div class="abs nw" style="left:41px;top:819px;line-height:16px">推广工具</div>
<div class="abs" style="left:0;top:842px;width:253px;height:1px;background:#8ea3bb"></div>
<div class="abs" style="left:0;top:843px;width:253px;height:29px;background:linear-gradient(#e6eaef,#dfe4ea)"></div>
<svg class="abs" style="left:9px;top:851px" width="16" height="16" viewBox="0 0 18 19"><path d="M3.500 1h8l4 4v13h-12z" fill="#fafafa" stroke="#a9a9a9"/><path d="M11.500 1v4h4" fill="#e6e6e6" stroke="#a9a9a9"/><path d="M1 9.500h6v-2.500l5 4.200-5 4.200v-2.500H1z" fill="#f39a2d" stroke="#d57a12" stroke-width=".7"/></svg>
<div class="abs nw" style="left:41px;top:854px;line-height:16px">筛选模板</div>
<div class="abs" style="left:229px;top:857px;width:0;height:0;border-left:4px solid transparent;border-right:4px solid transparent;border-bottom:4px solid #222"></div>
</div>
<div id="split"></div>
<div class="abs" style="left:254px;top:582px;width:10px;height:40px;background:#6d84a6"></div>
<div class="abs" style="left:256px;top:598px;width:0;height:0;border-top:4px solid transparent;border-bottom:4px solid transparent;border-right:5px solid #fff"></div>
<div id="mainborder"></div>
<div id="main">
<div class="abs" style="left:101px;top:5px;width:100px;height:25px;background:#395a84"></div>
<div class="tab" style="left:-1px;color:#222">高级样式</div>
<div class="tab" style="left:99px;color:#fff">关键词</div>
<div class="tab" style="left:199px;color:#222">创意</div>
<div class="tab" style="left:299px;color:#222">推广单元</div>
<div class="tab" style="left:399px;color:#9a9a9a">推广计划</div>
<div class="tab" style="left:499px;color:#222">项目</div>
<div class="tab" style="left:599px;color:#9a9a9a">账户</div>
<div class="abs" style="left:301px;top:12px;width:0;height:18px;border-left:1px dotted #b5b5b5"></div>
<div class="abs" style="left:401px;top:12px;width:0;height:18px;border-left:1px dotted #b5b5b5"></div>
<div class="abs" style="left:501px;top:12px;width:0;height:18px;border-left:1px dotted #b5b5b5"></div>
<div class="abs" style="left:601px;top:12px;width:0;height:18px;border-left:1px dotted #b5b5b5"></div>
<div class="abs" style="left:0;top:30px;width:1518px;height:2px;background:#2f5b8e"></div>
<div class="abs" style="left:1518px;top:30px;width:133px;height:1px;background:#7f98b8"></div>
<div class="abs nw" style="left:1527px;top:9px;line-height:16px;color:#1f3350">下载/查看数据信息</div>
<div class="dd" style="left:1639px;top:16px;border-top-color:#1e7fe0;border-left-width:4px;border-right-width:4px;border-top-width:4px"></div>
<div class="abs" style="left:0;top:32px;width:1651px;height:34px;background:linear-gradient(#fdfdfe,#f3f5f8 60%,#eceff3)"></div>
<div class="abs" style="left:0;top:66px;width:1651px;height:1px;background:#c9d0d9"></div>
<svg class="abs" style="left:10px;top:41px" width="16" height="16" viewBox="0 0 16 16"><rect x="1" y="1" width="14" height="14" fill="#fff" stroke="#1e88e5" stroke-width="2"/><path d="M8 4.500v7M4.500 8h7" stroke="#1e88e5" stroke-width="2"/></svg>
<div class="abs nw" style="left:32px;top:42px;line-height:16px;color:#000;">添加</div>
<svg class="abs" style="left:78px;top:41px" width="16" height="16" viewBox="0 0 16 16"><path d="M1 3.500h14M5.500 3v-2h5v2" stroke="#1e88e5" stroke-width="2" fill="none"/><path d="M3 4v10.500h10V4" fill="none" stroke="#1e88e5" stroke-width="2"/><path d="M6.300 6.500v5.500M9.700 6.500v5.500" stroke="#1e88e5" stroke-width="1.600"/></svg>
<div class="abs nw" style="left:95px;top:42px;line-height:16px;color:#000;">删除</div>
<div class="dd" style="left:130px;top:49px;border-top-color:#1e7fe0;border-width:4px 4px 0 4px"></div>
<svg class="abs" style="left:154px;top:41px" width="17" height="16" viewBox="0 0 17 16"><path d="M12 4V1H1.500v10.500H4" fill="none" stroke="#1e88e5" stroke-width="2"/><path d="M15 8V4.800H5v10h5" fill="none" stroke="#1e88e5" stroke-width="2"/><path d="M13 9.500v6M10 12.500h6" stroke="#1e88e5" stroke-width="2"/></svg>
<div class="abs nw" style="left:172px;top:42px;line-height:16px;color:#000;">批量添加/更新</div>
<div class="dd" style="left:261px;top:49px;border-top-color:#1e7fe0;border-width:4px 4px 0 4px"></div>
<svg class="abs" style="left:282px;top:41px" width="16" height="16" viewBox="0 0 16 16"><path d="M14 7V1H1v13.500h7" fill="none" stroke="#1e88e5" stroke-width="2"/><path d="M4 4.500h7M7.500 4.500v7" stroke="#1e88e5" stroke-width="2"/><path d="M10.500 10h5M13.800 8l2 2M15.500 13h-5M12.200 15l-2-2" stroke="#1e88e5" stroke-width="1.300" fill="none"/></svg>
<div class="abs nw" style="left:299px;top:42px;line-height:16px;color:#000;">文字替换</div>
<div class="dd" style="left:358px;top:49px;border-top-color:#1e7fe0;border-width:4px 4px 0 4px"></div>
<svg class="abs" style="left:379px;top:41px" width="16" height="16" viewBox="0 0 16 16"><rect x=".3" y=".3" width="15.400" height="15.400" rx="2.500" fill="#5bc4c0"/><circle cx="8" cy="8" r="6.200" fill="#fff"/><path d="M8 3.500v3.300M8 9.200v3.300M3.500 8h3.300M9.200 8h3.300" stroke="#f05a4e" stroke-width="1.200"/></svg>
<div class="abs nw" style="left:401px;top:42px;line-height:16px;color:#000;">圈选核心词</div>
<div class="abs" style="left:489px;top:44px;width:1px;height:11px;background:#b5d3f0"></div>
<svg class="abs" style="left:517px;top:41px" width="16" height="16" viewBox="0 0 16 16"><path d="M1 1h14v9M8 14.500H1V1" fill="none" stroke="#1e88e5" stroke-width="2"/><path d="M4 5h8M4 8h6" stroke="#1e88e5" stroke-width="1.500"/><path d="M14.500 9.500c-2.500-.5-4.500.5-5 3M10.500 10.500l-1.200 2.500 2.700.5" stroke="#1e88e5" stroke-width="1.400" fill="none"/></svg>
<div class="abs nw" style="left:539px;top:42px;line-height:16px;color:#000;">还原</div>
<svg class="abs" style="left:585px;top:41px" width="16" height="16" viewBox="0 0 16 16"><rect x="0" y="0" width="13" height="13.500" fill="#d2d2d2"/><path d="M3 3.500h7M6.500 3.500v7" stroke="#a9a9a9" stroke-width="1.800"/><path d="M8.500 8l7 2.800-2.800 1 1.800 3-1.500.9-1.800-3-2 2z" fill="#9c9c9c"/></svg>
<div class="abs nw" style="left:607px;top:42px;line-height:16px;color:#a8a8a8;">激活</div>
<svg class="abs" style="left:653px;top:41px" width="16" height="16" viewBox="0 0 16 16"><rect x="0" y="0" width="16" height="16" fill="#2b86ee"/><rect x="1.300" y="1.300" width="13.400" height="13.400" fill="none" stroke="#eaf3fd" stroke-width="1"/><path d="M3 6l4-1.500 2 .5 4-2v3.500H3z" fill="#dcebfc"/><path d="M1.500 7.300h13" stroke="#fff" stroke-width="1.200"/><circle cx="7.800" cy="10.600" r="1.500" fill="#fff"/><path d="M9 11.800l1.800 1.500" stroke="#fff" stroke-width="1.200"/></svg>
<div class="abs nw" style="left:675px;top:42px;line-height:16px;color:#000;">查看搜索词</div>
<svg class="abs" style="left:757px;top:41px" width="16" height="16" viewBox="0 0 16 16"><rect x="0" y="0" width="16" height="16" fill="#2b86ee"/><path d="M11.500 6V3H3.500v10.500H7" fill="none" stroke="#eaf3fd" stroke-width="1.300"/><path d="M5.200 5.500h4.500M5.200 8h2.500M5.200 10.500h2" stroke="#cfe3fb" stroke-width="1.100"/><circle cx="10.800" cy="10.800" r="2.600" fill="none" stroke="#fff" stroke-width="1.300"/><path d="M12.300 7.600v2.400h-2.400z" fill="#fff"/></svg>
<div class="abs nw" style="left:779px;top:42px;line-height:16px;color:#000;">转化搜索词</div>
<svg class="abs" style="left:861px;top:41px" width="16" height="16" viewBox="0 0 16 16"><rect x="0" y="1" width="14" height="14" fill="#1e88e5"/><path d="M3.500 12.500v-4M7 12.500v-8M10.500 12.500v-6" stroke="#fff" stroke-width="2"/></svg>
<div class="abs nw" style="left:878px;top:42px;line-height:16px;color:#000;">查看报告</div>
<div class="dd" style="left:937px;top:49px;border-top-color:#1e7fe0;border-width:4px 4px 0 4px"></div>
<svg class="abs" style="left:962px;top:41px" width="16" height="16" viewBox="0 0 16 16"><path d="M12 4.500V1.500H1.500v13H12v-3" fill="none" stroke="#1e88e5" stroke-width="2"/><path d="M6 8h9M12 5l3 3-3 3" stroke="#1e88e5" stroke-width="2" fill="none"/></svg>
<div class="abs nw" style="left:979px;top:42px;line-height:16px">导出<span style="font-family:'Liberation Mono',monospace;font-size:12px;letter-spacing:-1.200px">Excel</span></div>
<div class="dd" style="left:1044px;top:49px;border-top-color:#1e7fe0;border-width:4px 4px 0 4px"></div>
<div class="abs nw" style="left:1613px;top:41px;line-height:16px;font-family:'Liberation Mono',monospace;font-size:12px;letter-spacing:-1.200px">1/128</div>
<div class="abs" style="left:0;top:67px;width:1633px;height:25px;background:linear-gradient(#fbfcfd,#f3f5f8 50%,#eef1f5 24px,#fff 24px);border-bottom:1px solid #a3b8c9"></div>
<div class="abs" style="left:373px;top:67px;width:70px;height:25px;background:linear-gradient(90deg,#e6effa,#dfeaf8 70%,#c9dcf3)"></div>
<div class="abs" style="left:30px;top:68px;width:1px;height:24px;background:#c5cad2"></div>
<div class="abs" style="left:60px;top:68px;width:1px;height:24px;background:#c5cad2"></div>
<div class="th" style="left:63px;top:69px;color:#333">关键词名称</div>
<div class="abs" style="left:373px;top:68px;width:1px;height:24px;background:#c5cad2"></div>
<div class="th" style="left:376px;top:69px;color:#1f4f94">关键词长度</div>
<div class="abs" style="left:443px;top:68px;width:1px;height:24px;background:#c5cad2"></div>
<div class="th" style="left:446px;top:69px;color:#333">关键词状态</div>
<div class="abs" style="left:534px;top:68px;width:1px;height:24px;background:#c5cad2"></div>
<div class="th" style="left:537px;top:69px;color:#333">启用/暂停</div>
<div class="abs" style="left:625px;top:68px;width:1px;height:24px;background:#c5cad2"></div>
<div class="th" style="left:628px;top:69px;color:#333">标签</div>
<div class="abs" style="left:725px;top:68px;width:1px;height:24px;background:#c5cad2"></div>
<div class="th" style="left:728px;top:69px;color:#333">出价</div>
<div class="abs" style="left:825px;top:68px;width:1px;height:24px;background:#c5cad2"></div>
<div class="th" style="left:828px;top:69px;color:#333">计算机指导价</div>
<div class="abs" style="left:925px;top:68px;width:1px;height:24px;background:#c5cad2"></div>
<div class="th" style="left:928px;top:69px;color:#333">质量度</div>
<div class="abs" style="left:1028px;top:68px;width:1px;height:24px;background:#c5cad2"></div>
<div class="th" style="left:1031px;top:69px;color:#333">创意相关性</div>
<div class="abs" style="left:1131px;top:68px;width:1px;height:24px;background:#c5cad2"></div>
<div class="th" style="left:1134px;top:69px;color:#333">匹配模式</div>
<div class="abs" style="left:1236px;top:68px;width:1px;height:24px;background:#c5cad2"></div>
<div class="th" style="left:1239px;top:69px;color:#333">计算机端落地页链接</div>
<div class="abs" style="left:1386px;top:68px;width:1px;height:24px;background:#c5cad2"></div>
<div class="th" style="left:1389px;top:69px;color:#333">移动端落地页链接</div>
<div class="abs" style="left:1536px;top:68px;width:1px;height:24px;background:#c5cad2"></div>
<div class="th" style="left:1539px;top:69px;color:#333">关键词来源</div>
<svg class="abs" style="left:661px;top:74px" width="12" height="12" viewBox="0 0 12 12"><path d="M3.300 .8h4.400l2.500 2.500v4.400l-2.500 2.500H3.300L.8 7.700V3.300z" fill="#fdf3a0" stroke="#0d4db5" stroke-width="1.200"/><text x="5.500" y="8.700" font-size="8.500" font-weight="bold" text-anchor="middle" fill="#0a0ae8" font-family="Liberation Sans, sans-serif">?</text></svg>
<div class="abs" style="left:404px;top:69px;width:0;height:0;border-left:4px solid transparent;border-right:4px solid transparent;border-top:3px solid #7d9fc9"></div>
<div class="abs" style="left:1632px;top:67px;width:19px;height:36px;background:#fff;border-left:1px solid #c5cad2;border-bottom:1px solid #d8dce2;box-sizing:border-box"></div>
<svg class="abs" style="left:1636px;top:80px" width="12" height="12" viewBox="0 0 24 24"><g fill="#8c8c8c"><circle cx="12" cy="12" r="7.500"/><g id="gt"><rect x="9.500" y="0" width="5" height="5.500" rx="1"/><rect x="9.500" y="18.500" width="5" height="5.500" rx="1"/></g><use href="#gt" transform="rotate(45 12 12)"/><use href="#gt" transform="rotate(90 12 12)"/><use href="#gt" transform="rotate(135 12 12)"/></g><circle cx="12" cy="12" r="3.500" fill="#fff"/></svg>
<svg width="0" height="0" style="position:absolute"><defs><path id="st" d="M7 .8l1.900 4.100 4.400.5-3.300 3 .9 4.400L7 10.600 3.100 12.800l.9-4.400-3.300-3 4.400-.5z"/><linearGradient id="pgr" x1="0" y1="0" x2="0" y2="1"><stop offset="0" stop-color="#d9fbbd"/><stop offset=".5" stop-color="#b2f084"/><stop offset="1" stop-color="#6fd038"/></linearGradient><g id="plus"><path d="M4.400 .7h3.200v3.700h3.700v3.200H7.600v3.700H4.400V7.600H.7V4.400h3.700z" fill="url(#pgr)" stroke="#3a9a1a" stroke-width="1" stroke-linejoin="round"/></g><g id="edit"><path d="M15 5.500v9.700H.8V.8H10.500" fill="none" stroke="#939398" stroke-width="1.600"/><path d="M4 12.300L14.300 1.800" stroke="#939398" stroke-width="2.300"/></g></defs></svg>
<div class="abs" style="left:0;top:93px;width:1633px;height:526px;overflow:hidden">
<div class="row" style="top:0px;background:#fdd968">
<svg class="abs" style="left:10px;top:5px" width="12" height="12" viewBox="0 0 12 12"><use href="#plus"/></svg>
<span style="left:64px">成都市开锁公司电话24小时上门</span><span style="left:377px">28</span><span style="left:448px">本地新增</span><span style="left:539px">启用</span><span style="left:629px">&lt;未设置&gt;</span><span style="left:729px">4.68</span><span style="left:830px">-</span>
<svg class="abs" style="left:927px;top:4px" width="72" height="14" viewBox="0 0 72 14"><use href="#st" transform="translate(0.0,.6) scale(.93)" fill="#e3edf8" stroke="#e3edf8" stroke-width="1.100" stroke-linejoin="round"/><use href="#st" transform="translate(13.8,.6) scale(.93)" fill="#e3edf8" stroke="#e3edf8" stroke-width="1.100" stroke-linejoin="round"/><use href="#st" transform="translate(27.6,.6) scale(.93)" fill="#e3edf8" stroke="#e3edf8" stroke-width="1.100" stroke-linejoin="round"/><use href="#st" transform="translate(41.4,.6) scale(.93)" fill="#e3edf8" stroke="#e3edf8" stroke-width="1.100" stroke-linejoin="round"/><use href="#st" transform="translate(55.2,.6) scale(.93)" fill="#e3edf8" stroke="#e3edf8" stroke-width="1.100" stroke-linejoin="round"/></svg>
<span style="left:1001px;color:#f01010">0</span><span style="left:1032px">数据积累中</span><span style="left:1135px">智能匹配</span><span style="left:1541px">-</span>
<svg class="abs" style="left:242px;top:3px" width="16" height="16" viewBox="0 0 16 16"><use href="#edit"/></svg>
<svg class="abs" style="left:571px;top:3px" width="16" height="16" viewBox="0 0 16 16"><use href="#edit"/></svg>
<svg class="abs" style="left:707px;top:3px" width="16" height="16" viewBox="0 0 16 16"><use href="#edit"/></svg>
<svg class="abs" style="left:761px;top:3px" width="16" height="16" viewBox="0 0 16 16"><use href="#edit"/></svg>
<svg class="abs" style="left:1191px;top:3px" width="16" height="16" viewBox="0 0 16 16"><use href="#edit"/></svg>
<svg class="abs" style="left:1241px;top:3px" width="16" height="16" viewBox="0 0 16 16"><use href="#edit"/></svg>
<svg class="abs" style="left:1391px;top:3px" width="16" height="16" viewBox="0 0 16 16"><use href="#edit"/></svg>
<span style="left:893px;top:4px;color:#a3977a">采纳</span>
</div>
<div class="row" style="top:22px;background:#f3f6f8">
<svg class="abs" style="left:10px;top:5px" width="12" height="12" viewBox="0 0 12 12"><use href="#plus"/></svg>
<span style="left:64px">简阳开锁电话24小时上门服务</span><span style="left:377px">26</span><span style="left:448px">本地新增</span><span style="left:539px">启用</span><span style="left:629px">&lt;未设置&gt;</span><span style="left:729px">4.68</span><span style="left:830px">-</span>
<svg class="abs" style="left:927px;top:4px" width="72" height="14" viewBox="0 0 72 14"><use href="#st" transform="translate(0.0,.6) scale(.93)" fill="#fff" stroke="#ced4db" stroke-width="1.100" stroke-linejoin="round"/><use href="#st" transform="translate(13.8,.6) scale(.93)" fill="#fff" stroke="#ced4db" stroke-width="1.100" stroke-linejoin="round"/><use href="#st" transform="translate(27.6,.6) scale(.93)" fill="#fff" stroke="#ced4db" stroke-width="1.100" stroke-linejoin="round"/><use href="#st" transform="translate(41.4,.6) scale(.93)" fill="#fff" stroke="#ced4db" stroke-width="1.100" stroke-linejoin="round"/><use href="#st" transform="translate(55.2,.6) scale(.93)" fill="#fff" stroke="#ced4db" stroke-width="1.100" stroke-linejoin="round"/></svg>
<span style="left:1001px;color:#f01010">0</span><span style="left:1032px">数据积累中</span><span style="left:1135px">智能匹配</span><span style="left:1541px">-</span>
</div>
<div class="row" style="top:44px;background:#fff">
<svg class="abs" style="left:10px;top:5px" width="12" height="12" viewBox="0 0 12 12"><use href="#plus"/></svg>
<span style="left:64px">成都市开锁公司24小时电话</span><span style="left:377px">24</span><span style="left:448px">本地新增</span><span style="left:539px">启用</span><span style="left:629px">&lt;未设置&gt;</span><span style="left:729px">4.68</span><span style="left:830px">-</span>
<svg class="abs" style="left:927px;top:4px" width="72" height="14" viewBox="0 0 72 14"><use href="#st" transform="translate(0.0,.6) scale(.93)" fill="#fff" stroke="#ced4db" stroke-width="1.100" stroke-linejoin="round"/><use href="#st" transform="translate(13.8,.6) scale(.93)" fill="#fff" stroke="#ced4db" stroke-width="1.100" stroke-linejoin="round"/><use href="#st" transform="translate(27.6,.6) scale(.93)" fill="#fff" stroke="#ced4db" stroke-width="1.100" stroke-linejoin="round"/><use href="#st" transform="translate(41.4,.6) scale(.93)" fill="#fff" stroke="#ced4db" stroke-width="1.100" stroke-linejoin="round"/><use href="#st" transform="translate(55.2,.6) scale(.93)" fill="#fff" stroke="#ced4db" stroke-width="1.100" stroke-linejoin="round"/></svg>
<span style="left:1001px;color:#f01010">0</span><span style="left:1032px">数据积累中</span><span style="left:1135px">智能匹配</span><span style="left:1541px">-</span>
</div>
<div class="row" style="top:66px;background:#f3f6f8">
<svg class="abs" style="left:10px;top:5px" width="12" height="12" viewBox="0 0 12 12"><use href="#plus"/></svg>
<span style="left:64px">成都区24小时上门开锁电话</span><span style="left:377px">24</span><span style="left:448px">本地新增</span><span style="left:539px">启用</span><span style="left:629px">&lt;未设置&gt;</span><span style="left:729px">4.68</span><span style="left:830px">-</span>
<svg class="abs" style="left:927px;top:4px" width="72" height="14" viewBox="0 0 72 14"><use href="#st" transform="translate(0.0,.6) scale(.93)" fill="#fff" stroke="#ced4db" stroke-width="1.100" stroke-linejoin="round"/><use href="#st" transform="translate(13.8,.6) scale(.93)" fill="#fff" stroke="#ced4db" stroke-width="1.100" stroke-linejoin="round"/><use href="#st" transform="translate(27.6,.6) scale(.93)" fill="#fff" stroke="#ced4db" stroke-width="1.100" stroke-linejoin="round"/><use href="#st" transform="translate(41.4,.6) scale(.93)" fill="#fff" stroke="#ced4db" stroke-width="1.100" stroke-linejoin="round"/><use href="#st" transform="translate(55.2,.6) scale(.93)" fill="#fff" stroke="#ced4db" stroke-width="1.100" stroke-linejoin="round"/></svg>
<span style="left:1001px;color:#f01010">0</span><span style="left:1032px">数据积累中</span><span style="left:1135px">智能匹配</span><span style="left:1541px">-</span>
</div>
<div class="row" style="top:88px;background:#fff">
<svg class="abs" style="left:10px;top:5px" width="12" height="12" viewBox="0 0 12 12"><use href="#plus"/></svg>
<span style="left:64px">成都市成华区开锁公司电话</span><span style="left:377px">24</span><span style="left:448px">本地新增</span><span style="left:539px">启用</span><span style="left:629px">&lt;未设置&gt;</span><span style="left:729px">4.68</span><span style="left:830px">-</span>
<svg class="abs" style="left:927px;top:4px" width="72" height="14" viewBox="0 0 72 14"><use href="#st" transform="translate(0.0,.6) scale(.93)" fill="#fff" stroke="#ced4db" stroke-width="1.100" stroke-linejoin="round"/><use href="#st" transform="translate(13.8,.6) scale(.93)" fill="#fff" stroke="#ced4db" stroke-width="1.100" stroke-linejoin="round"/><use href="#st" transform="translate(27.6,.6) scale(.93)" fill="#fff" stroke="#ced4db" stroke-width="1.100" stroke-linejoin="round"/><use href="#st" transform="translate(41.4,.6) scale(.93)" fill="#fff" stroke="#ced4db" stroke-width="1.100" stroke-linejoin="round"/><use href="#st" transform="translate(55.2,.6) scale(.93)" fill="#fff" stroke="#ced4db" stroke-width="1.100" stroke-linejoin="round"/></svg>
<span style="left:1001px;color:#f01010">0</span><span style="left:1032px">数据积累中</span><span style="left:1135px">智能匹配</span><span style="left:1541px">-</span>
</div>
<div class="row" style="top:110px;background:#f3f6f8">
<svg class="abs" style="left:10px;top:5px" width="12" height="12" viewBox="0 0 12 12"><use href="#plus"/></svg>
<span style="left:64px">成都龙泉驿区开锁公司电话</span><span style="left:377px">24</span><span style="left:448px">本地新增</span><span style="left:539px">启用</span><span style="left:629px">&lt;未设置&gt;</span><span style="left:729px">4.68</span><span style="left:830px">-</span>
<svg class="abs" style="left:927px;top:4px" width="72" height="14" viewBox="0 0 72 14"><use href="#st" transform="translate(0.0,.6) scale(.93)" fill="#fff" stroke="#ced4db" stroke-width="1.100" stroke-linejoin="round"/><use href="#st" transform="translate(13.8,.6) scale(.93)" fill="#fff" stroke="#ced4db" stroke-width="1.100" stroke-linejoin="round"/><use href="#st" transform="translate(27.6,.6) scale(.93)" fill="#fff" stroke="#ced4db" stroke-width="1.100" stroke-linejoin="round"/><use href="#st" transform="translate(41.4,.6) scale(.93)" fill="#fff" stroke="#ced4db" stroke-width="1.100" stroke-linejoin="round"/><use href="#st" transform="translate(55.2,.6) scale(.93)" fill="#fff" stroke="#ced4db" stroke-width="1.100" stroke-linejoin="round"/></svg>
<span style="left:1001px;color:#f01010">0</span><span style="left:1032px">数据积累中</span><span style="left:1135px">智能匹配</span><span style="left:1541px">-</span>
</div>
<div class="row" style="top:132px;background:#fff">
<svg class="abs" style="left:10px;top:5px" width="12" height="12" viewBox="0 0 12 12"><use href="#plus"/></svg>
<span style="left:64px">成都24小时开锁电话号码</span><span style="left:377px">22</span><span style="left:448px">本地新增</span><span style="left:539px">启用</span><span style="left:629px">&lt;未设置&gt;</span><span style="left:729px">4.68</span><span style="left:830px">-</span>
<svg class="abs" style="left:927px;top:4px" width="72" height="14" viewBox="0 0 72 14"><use href="#st" transform="translate(0.0,.6) scale(.93)" fill="#fff" stroke="#ced4db" stroke-width="1.100" stroke-linejoin="round"/><use href="#st" transform="translate(13.8,.6) scale(.93)" fill="#fff" stroke="#ced4db" stroke-width="1.100" stroke-linejoin="round"/><use href="#st" transform="translate(27.6,.6) scale(.93)" fill="#fff" stroke="#ced4db" stroke-width="1.100" stroke-linejoin="round"/><use href="#st" transform="translate(41.4,.6) scale(.93)" fill="#fff" stroke="#ced4db" stroke-width="1.100" stroke-linejoin="round"/><use href="#st" transform="translate(55.2,.6) scale(.93)" fill="#fff" stroke="#ced4db" stroke-width="1.100" stroke-linejoin="round"/></svg>
<span style="left:1001px;color:#f01010">0</span><span style="left:1032px">数据积累中</span><span style="left:1135px">智能匹配</span><span style="left:1541px">-</span>
</div>
<div class="row" style="top:154px;background:#f3f6f8">
<svg class="abs" style="left:10px;top:5px" width="12" height="12" viewBox="0 0 12 12"><use href="#plus"/></svg>
<span style="left:64px">成都开锁电话24小时电话</span><span style="left:377px">22</span><span style="left:448px">本地新增</span><span style="left:539px">启用</span><span style="left:629px">&lt;未设置&gt;</span><span style="left:729px">4.68</span><span style="left:830px">-</span>
<svg class="abs" style="left:927px;top:4px" width="72" height="14" viewBox="0 0 72 14"><use href="#st" transform="translate(0.0,.6) scale(.93)" fill="#fff" stroke="#ced4db" stroke-width="1.100" stroke-linejoin="round"/><use href="#st" transform="translate(13.8,.6) scale(.93)" fill="#fff" stroke="#ced4db" stroke-width="1.100" stroke-linejoin="round"/><use href="#st" transform="translate(27.6,.6) scale(.93)" fill="#fff" stroke="#ced4db" stroke-width="1.100" stroke-linejoin="round"/><use href="#st" transform="translate(41.4,.6) scale(.93)" fill="#fff" stroke="#ced4db" stroke-width="1.100" stroke-linejoin="round"/><use href="#st" transform="translate(55.2,.6) scale(.93)" fill="#fff" stroke="#ced4db" stroke-width="1.100" stroke-linejoin="round"/></svg>
<span style="left:1001px;color:#f01010">0</span><span style="left:1032px">数据积累中</span><span style="left:1135px">智能匹配</span><span style="left:1541px">-</span>
</div>
<div class="row" style="top:176px;background:#fff">
<svg class="abs" style="left:10px;top:5px" width="12" height="12" viewBox="0 0 12 12"><use href="#plus"/></svg>
<span style="left:64px">成都开锁电话24小时上门</span><span style="left:377px">22</span><span style="left:448px">本地新增</span><span style="left:539px">启用</span><span style="left:629px">&lt;未设置&gt;</span><span style="left:729px">4.68</span><span style="left:830px">-</span>
<svg class="abs" style="left:927px;top:4px" width="72" height="14" viewBox="0 0 72 14"><use href="#st" transform="translate(0.0,.6) scale(.93)" fill="#fff" stroke="#ced4db" stroke-width="1.100" stroke-linejoin="round"/><use href="#st" transform="translate(13.8,.6) scale(.93)" fill="#fff" stroke="#ced4db" stroke-width="1.100" stroke-linejoin="round"/><use href="#st" transform="translate(27.6,.6) scale(.93)" fill="#fff" stroke="#ced4db" stroke-width="1.100" stroke-linejoin="round"/><use href="#st" transform="translate(41.4,.6) scale(.93)" fill="#fff" stroke="#ced4db" stroke-width="1.100" stroke-linejoin="round"/><use href="#st" transform="translate(55.2,.6) scale(.93)" fill="#fff" stroke="#ced4db" stroke-width="1.100" stroke-linejoin="round"/></svg>
<span style="left:1001px;color:#f01010">0</span><span style="left:1032px">数据积累中</span><span style="left:1135px">智能匹配</span><span style="left:1541px">-</span>
</div>
<div class="row" style="top:198px;background:#f3f6f8">
<svg class="abs" style="left:10px;top:5px" width="12" height="12" viewBox="0 0 12 12"><use href="#plus"/></svg>
<span style="left:64px">成都成华区上门开锁电话</span><span style="left:377px">22</span><span style="left:448px">本地新增</span><span style="left:539px">启用</span><span style="left:629px">&lt;未设置&gt;</span><span style="left:729px">4.68</span><span style="left:830px">-</span>
<svg class="abs" style="left:927px;top:4px" width="72" height="14" viewBox="0 0 72 14"><use href="#st" transform="translate(0.0,.6) scale(.93)" fill="#fff" stroke="#ced4db" stroke-width="1.100" stroke-linejoin="round"/><use href="#st" transform="translate(13.8,.6) scale(.93)" fill="#fff" stroke="#ced4db" stroke-width="1.100" stroke-linejoin="round"/><use href="#st" transform="translate(27.6,.6) scale(.93)" fill="#fff" stroke="#ced4db" stroke-width="1.100" stroke-linejoin="round"/><use href="#st" transform="translate(41.4,.6) scale(.93)" fill="#fff" stroke="#ced4db" stroke-width="1.100" stroke-linejoin="round"/><use href="#st" transform="translate(55.2,.6) scale(.93)" fill="#fff" stroke="#ced4db" stroke-width="1.100" stroke-linejoin="round"/></svg>
<span style="left:1001px;color:#f01010">0</span><span style="left:1032px">数据积累中</span><span style="left:1135px">智能匹配</span><span style="left:1541px">-</span>
</div>
<div class="row" style="top:220px;background:#fff">
<svg class="abs" style="left:10px;top:5px" width="12" height="12" viewBox="0 0 12 12"><use href="#plus"/></svg>
<span style="left:64px">成都金牛区开锁电话附近</span><span style="left:377px">22</span><span style="left:448px">本地新增</span><span style="left:539px">启用</span><span style="left:629px">&lt;未设置&gt;</span><span style="left:729px">4.68</span><span style="left:830px">-</span>
<svg class="abs" style="left:927px;top:4px" width="72" height="14" viewBox="0 0 72 14"><use href="#st" transform="translate(0.0,.6) scale(.93)" fill="#fff" stroke="#ced4db" stroke-width="1.100" stroke-linejoin="round"/><use href="#st" transform="translate(13.8,.6) scale(.93)" fill="#fff" stroke="#ced4db" stroke-width="1.100" stroke-linejoin="round"/><use href="#st" transform="translate(27.6,.6) scale(.93)" fill="#fff" stroke="#ced4db" stroke-width="1.100" stroke-linejoin="round"/><use href="#st" transform="translate(41.4,.6) scale(.93)" fill="#fff" stroke="#ced4db" stroke-width="1.100" stroke-linejoin="round"/><use href="#st" transform="translate(55.2,.6) scale(.93)" fill="#fff" stroke="#ced4db" stroke-width="1.100" stroke-linejoin="round"/></svg>
<span style="left:1001px;color:#f01010">0</span><span style="left:1032px">数据积累中</span><span style="left:1135px">智能匹配</span><span style="left:1541px">-</span>
</div>
<div class="row" style="top:242px;background:#f3f6f8">
<svg class="abs" style="left:10px;top:5px" width="12" height="12" viewBox="0 0 12 12"><use href="#plus"/></svg>
<span style="left:64px">成都龙泉驿开锁公司电话</span><span style="left:377px">22</span><span style="left:448px">本地新增</span><span style="left:539px">启用</span><span style="left:629px">&lt;未设置&gt;</span><span style="left:729px">4.68</span><span style="left:830px">-</span>
<svg class="abs" style="left:927px;top:4px" width="72" height="14" viewBox="0 0 72 14"><use href="#st" transform="translate(0.0,.6) scale(.93)" fill="#fff" stroke="#ced4db" stroke-width="1.100" stroke-linejoin="round"/><use href="#st" transform="translate(13.8,.6) scale(.93)" fill="#fff" stroke="#ced4db" stroke-width="1.100" stroke-linejoin="round"/><use href="#st" transform="translate(27.6,.6) scale(.93)" fill="#fff" stroke="#ced4db" stroke-width="1.100" stroke-linejoin="round"/><use href="#st" transform="translate(41.4,.6) scale(.93)" fill="#fff" stroke="#ced4db" stroke-width="1.100" stroke-linejoin="round"/><use href="#st" transform="translate(55.2,.6) scale(.93)" fill="#fff" stroke="#ced4db" stroke-width="1.100" stroke-linejoin="round"/></svg>
<span style="left:1001px;color:#f01010">0</span><span style="left:1032px">数据积累中</span><span style="left:1135px">智能匹配</span><span style="left:1541px">-</span>
</div>
<div class="row" style="top:264px;background:#fff">
<svg class="abs" style="left:10px;top:5px" width="12" height="12" viewBox="0 0 12 12"><use href="#plus"/></svg>
<span style="left:64px">成都保险柜开锁公司电话</span><span style="left:377px">22</span><span style="left:448px">本地新增</span><span style="left:539px">启用</span><span style="left:629px">&lt;未设置&gt;</span><span style="left:729px">4.68</span><span style="left:830px">-</span>
<svg class="abs" style="left:927px;top:4px" width="72" height="14" viewBox="0 0 72 14"><use href="#st" transform="translate(0.0,.6) scale(.93)" fill="#fff" stroke="#ced4db" stroke-width="1.100" stroke-linejoin="round"/><use href="#st" transform="translate(13.8,.6) scale(.93)" fill="#fff" stroke="#ced4db" stroke-width="1.100" stroke-linejoin="round"/><use href="#st" transform="translate(27.6,.6) scale(.93)" fill="#fff" stroke="#ced4db" stroke-width="1.100" stroke-linejoin="round"/><use href="#st" transform="translate(41.4,.6) scale(.93)" fill="#fff" stroke="#ced4db" stroke-width="1.100" stroke-linejoin="round"/><use href="#st" transform="translate(55.2,.6) scale(.93)" fill="#fff" stroke="#ced4db" stroke-width="1.100" stroke-linejoin="round"/></svg>
<span style="left:1001px;color:#f01010">0</span><span style="left:1032px">数据积累中</span><span style="left:1135px">智能匹配</span><span style="left:1541px">-</span>
</div>
<div class="row" style="top:286px;background:#f3f6f8">
<svg class="abs" style="left:10px;top:5px" width="12" height="12" viewBox="0 0 12 12"><use href="#plus"/></svg>
<span style="left:64px">成都开锁公司24小时电话</span><span style="left:377px">22</span><span style="left:448px">本地新增</span><span style="left:539px">启用</span><span style="left:629px">&lt;未设置&gt;</span><span style="left:729px">4.68</span><span style="left:830px">-</span>
<svg class="abs" style="left:927px;top:4px" width="72" height="14" viewBox="0 0 72 14"><use href="#st" transform="translate(0.0,.6) scale(.93)" fill="#fff" stroke="#ced4db" stroke-width="1.100" stroke-linejoin="round"/><use href="#st" transform="translate(13.8,.6) scale(.93)" fill="#fff" stroke="#ced4db" stroke-width="1.100" stroke-linejoin="round"/><use href="#st" transform="translate(27.6,.6) scale(.93)" fill="#fff" stroke="#ced4db" stroke-width="1.100" stroke-linejoin="round"/><use href="#st" transform="translate(41.4,.6) scale(.93)" fill="#fff" stroke="#ced4db" stroke-width="1.100" stroke-linejoin="round"/><use href="#st" transform="translate(55.2,.6) scale(.93)" fill="#fff" stroke="#ced4db" stroke-width="1.100" stroke-linejoin="round"/></svg>
<span style="left:1001px;color:#f01010">0</span><span style="left:1032px">数据积累中</span><span style="left:1135px">智能匹配</span><span style="left:1541px">-</span>
</div>
<div class="row" style="top:308px;background:#fff">
<svg class="abs" style="left:10px;top:5px" width="12" height="12" viewBox="0 0 12 12"><use href="#plus"/></svg>
<span style="left:64px">成都开锁公司电话24小时</span><span style="left:377px">22</span><span style="left:448px">本地新增</span><span style="left:539px">启用</span><span style="left:629px">&lt;未设置&gt;</span><span style="left:729px">4.68</span><span style="left:830px">-</span>
<svg class="abs" style="left:927px;top:4px" width="72" height="14" viewBox="0 0 72 14"><use href="#st" transform="translate(0.0,.6) scale(.93)" fill="#fff" stroke="#ced4db" stroke-width="1.100" stroke-linejoin="round"/><use href="#st" transform="translate(13.8,.6) scale(.93)" fill="#fff" stroke="#ced4db" stroke-width="1.100" stroke-linejoin="round"/><use href="#st" transform="translate(27.6,.6) scale(.93)" fill="#fff" stroke="#ced4db" stroke-width="1.100" stroke-linejoin="round"/><use href="#st" transform="translate(41.4,.6) scale(.93)" fill="#fff" stroke="#ced4db" stroke-width="1.100" stroke-linejoin="round"/><use href="#st" transform="translate(55.2,.6) scale(.93)" fill="#fff" stroke="#ced4db" stroke-width="1.100" stroke-linejoin="round"/></svg>
<span style="left:1001px;color:#f01010">0</span><span style="left:1032px">数据积累中</span><span style="left:1135px">智能匹配</span><span style="left:1541px">-</span>
</div>
<div class="row" style="top:330px;background:#f3f6f8">
<svg class="abs" style="left:10px;top:5px" width="12" height="12" viewBox="0 0 12 12"><use href="#plus"/></svg>
<span style="left:64px">成都附近24小时开锁公司</span><span style="left:377px">22</span><span style="left:448px">本地新增</span><span style="left:539px">启用</span><span style="left:629px">&lt;未设置&gt;</span><span style="left:729px">4.68</span><span style="left:830px">-</span>
<svg class="abs" style="left:927px;top:4px" width="72" height="14" viewBox="0 0 72 14"><use href="#st" transform="translate(0.0,.6) scale(.93)" fill="#fff" stroke="#ced4db" stroke-width="1.100" stroke-linejoin="round"/><use href="#st" transform="translate(13.8,.6) scale(.93)" fill="#fff" stroke="#ced4db" stroke-width="1.100" stroke-linejoin="round"/><use href="#st" transform="translate(27.6,.6) scale(.93)" fill="#fff" stroke="#ced4db" stroke-width="1.100" stroke-linejoin="round"/><use href="#st" transform="translate(41.4,.6) scale(.93)" fill="#fff" stroke="#ced4db" stroke-width="1.100" stroke-linejoin="round"/><use href="#st" transform="translate(55.2,.6) scale(.93)" fill="#fff" stroke="#ced4db" stroke-width="1.100" stroke-linejoin="round"/></svg>
<span style="left:1001px;color:#f01010">0</span><span style="left:1032px">数据积累中</span><span style="left:1135px">智能匹配</span><span style="left:1541px">-</span>
</div>
<div class="row" style="top:352px;background:#fff">
<svg class="abs" style="left:10px;top:5px" width="12" height="12" viewBox="0 0 12 12"><use href="#plus"/></svg>
<span style="left:64px">邛崃开锁电话24小时上门</span><span style="left:377px">22</span><span style="left:448px">本地新增</span><span style="left:539px">启用</span><span style="left:629px">&lt;未设置&gt;</span><span style="left:729px">4.68</span><span style="left:830px">-</span>
<svg class="abs" style="left:927px;top:4px" width="72" height="14" viewBox="0 0 72 14"><use href="#st" transform="translate(0.0,.6) scale(.93)" fill="#fff" stroke="#ced4db" stroke-width="1.100" stroke-linejoin="round"/><use href="#st" transform="translate(13.8,.6) scale(.93)" fill="#fff" stroke="#ced4db" stroke-width="1.100" stroke-linejoin="round"/><use href="#st" transform="translate(27.6,.6) scale(.93)" fill="#fff" stroke="#ced4db" stroke-width="1.100" stroke-linejoin="round"/><use href="#st" transform="translate(41.4,.6) scale(.93)" fill="#fff" stroke="#ced4db" stroke-width="1.100" stroke-linejoin="round"/><use href="#st" transform="translate(55.2,.6) scale(.93)" fill="#fff" stroke="#ced4db" stroke-width="1.100" stroke-linejoin="round"/></svg>
<span style="left:1001px;color:#f01010">0</span><span style="left:1032px">数据积累中</span><span style="left:1135px">智能匹配</span><span style="left:1541px">-</span>
</div>
<div class="row" style="top:374px;background:#f3f6f8">
<svg class="abs" style="left:10px;top:5px" width="12" height="12" viewBox="0 0 12 12"><use href="#plus"/></svg>
<span style="left:64px">都江堰开锁公司电话号码</span><span style="left:377px">22</span><span style="left:448px">本地新增</span><span style="left:539px">启用</span><span style="left:629px">&lt;未设置&gt;</span><span style="left:729px">4.68</span><span style="left:830px">-</span>
<svg class="abs" style="left:927px;top:4px" width="72" height="14" viewBox="0 0 72 14"><use href="#st" transform="translate(0.0,.6) scale(.93)" fill="#fff" stroke="#ced4db" stroke-width="1.100" stroke-linejoin="round"/><use href="#st" transform="translate(13.8,.6) scale(.93)" fill="#fff" stroke="#ced4db" stroke-width="1.100" stroke-linejoin="round"/><use href="#st" transform="translate(27.6,.6) scale(.93)" fill="#fff" stroke="#ced4db" stroke-width="1.100" stroke-linejoin="round"/><use href="#st" transform="translate(41.4,.6) scale(.93)" fill="#fff" stroke="#ced4db" stroke-width="1.100" stroke-linejoin="round"/><use href="#st" transform="translate(55.2,.6) scale(.93)" fill="#fff" stroke="#ced4db" stroke-width="1.100" stroke-linejoin="round"/></svg>
<span style="left:1001px;color:#f01010">0</span><span style="left:1032px">数据积累中</span><span style="left:1135px">智能匹配</span><span style="left:1541px">-</span>
</div>
<div class="row" style="top:396px;background:#fff">
<svg class="abs" style="left:10px;top:5px" width="12" height="12" viewBox="0 0 12 12"><use href="#plus"/></svg>
<span style="left:64px">龙泉驿区24小时开锁电话</span><span style="left:377px">22</span><span style="left:448px">本地新增</span><span style="left:539px">启用</span><span style="left:629px">&lt;未设置&gt;</span><span style="left:729px">4.68</span><span style="left:830px">-</span>
<svg class="abs" style="left:927px;top:4px" width="72" height="14" viewBox="0 0 72 14"><use href="#st" transform="translate(0.0,.6) scale(.93)" fill="#fff" stroke="#ced4db" stroke-width="1.100" stroke-linejoin="round"/><use href="#st" transform="translate(13.8,.6) scale(.93)" fill="#fff" stroke="#ced4db" stroke-width="1.100" stroke-linejoin="round"/><use href="#st" transform="translate(27.6,.6) scale(.93)" fill="#fff" stroke="#ced4db" stroke-width="1.100" stroke-linejoin="round"/><use href="#st" transform="translate(41.4,.6) scale(.93)" fill="#fff" stroke="#ced4db" stroke-width="1.100" stroke-linejoin="round"/><use href="#st" transform="translate(55.2,.6) scale(.93)" fill="#fff" stroke="#ced4db" stroke-width="1.100" stroke-linejoin="round"/></svg>
<span style="left:1001px;color:#f01010">0</span><span style="left:1032px">数据积累中</span><span style="left:1135px">智能匹配</span><span style="left:1541px">-</span>
</div>
<div class="row" style="top:418px;background:#f3f6f8">
<svg class="abs" style="left:10px;top:5px" width="12" height="12" viewBox="0 0 12 12"><use href="#plus"/></svg>
<span style="left:64px">成都龙泉驿区开锁电话</span><span style="left:377px">20</span><span style="left:448px">本地新增</span><span style="left:539px">启用</span><span style="left:629px">&lt;未设置&gt;</span><span style="left:729px">4.68</span><span style="left:830px">-</span>
<svg class="abs" style="left:927px;top:4px" width="72" height="14" viewBox="0 0 72 14"><use href="#st" transform="translate(0.0,.6) scale(.93)" fill="#fff" stroke="#ced4db" stroke-width="1.100" stroke-linejoin="round"/><use href="#st" transform="translate(13.8,.6) scale(.93)" fill="#fff" stroke="#ced4db" stroke-width="1.100" stroke-linejoin="round"/><use href="#st" transform="translate(27.6,.6) scale(.93)" fill="#fff" stroke="#ced4db" stroke-width="1.100" stroke-linejoin="round"/><use href="#st" transform="translate(41.4,.6) scale(.93)" fill="#fff" stroke="#ced4db" stroke-width="1.100" stroke-linejoin="round"/><use href="#st" transform="translate(55.2,.6) scale(.93)" fill="#fff" stroke="#ced4db" stroke-width="1.100" stroke-linejoin="round"/></svg>
<span style="left:1001px;color:#f01010">0</span><span style="left:1032px">数据积累中</span><span style="left:1135px">智能匹配</span><span style="left:1541px">-</span>
</div>
<div class="row" style="top:440px;background:#fff">
<svg class="abs" style="left:10px;top:5px" width="12" height="12" viewBox="0 0 12 12"><use href="#plus"/></svg>
<span style="left:64px">成都东站附近开锁电话</span><span style="left:377px">20</span><span style="left:448px">本地新增</span><span style="left:539px">启用</span><span style="left:629px">&lt;未设置&gt;</span><span style="left:729px">4.68</span><span style="left:830px">-</span>
<svg class="abs" style="left:927px;top:4px" width="72" height="14" viewBox="0 0 72 14"><use href="#st" transform="translate(0.0,.6) scale(.93)" fill="#fff" stroke="#ced4db" stroke-width="1.100" stroke-linejoin="round"/><use href="#st" transform="translate(13.8,.6) scale(.93)" fill="#fff" stroke="#ced4db" stroke-width="1.100" stroke-linejoin="round"/><use href="#st" transform="translate(27.6,.6) scale(.93)" fill="#fff" stroke="#ced4db" stroke-width="1.100" stroke-linejoin="round"/><use href="#st" transform="translate(41.4,.6) scale(.93)" fill="#fff" stroke="#ced4db" stroke-width="1.100" stroke-linejoin="round"/><use href="#st" transform="translate(55.2,.6) scale(.93)" fill="#fff" stroke="#ced4db" stroke-width="1.100" stroke-linejoin="round"/></svg>
<span style="left:1001px;color:#f01010">0</span><span style="left:1032px">数据积累中</span><span style="left:1135px">智能匹配</span><span style="left:1541px">-</span>
</div>
<div class="row" style="top:462px;background:#f3f6f8">
<svg class="abs" style="left:10px;top:5px" width="12" height="12" viewBox="0 0 12 12"><use href="#plus"/></svg>
<span style="left:64px">成都开锁电话附近开锁</span><span style="left:377px">20</span><span style="left:448px">本地新增</span><span style="left:539px">启用</span><span style="left:629px">&lt;未设置&gt;</span><span style="left:729px">4.68</span><span style="left:830px">-</span>
<svg class="abs" style="left:927px;top:4px" width="72" height="14" viewBox="0 0 72 14"><use href="#st" transform="translate(0.0,.6) scale(.93)" fill="#fff" stroke="#ced4db" stroke-width="1.100" stroke-linejoin="round"/><use href="#st" transform="translate(13.8,.6) scale(.93)" fill="#fff" stroke="#ced4db" stroke-width="1.100" stroke-linejoin="round"/><use href="#st" transform="translate(27.6,.6) scale(.93)" fill="#fff" stroke="#ced4db" stroke-width="1.100" stroke-linejoin="round"/><use href="#st" transform="translate(41.4,.6) scale(.93)" fill="#fff" stroke="#ced4db" stroke-width="1.100" stroke-linejoin="round"/><use href="#st" transform="translate(55.2,.6) scale(.93)" fill="#fff" stroke="#ced4db" stroke-width="1.100" stroke-linejoin="round"/></svg>
<span style="left:1001px;color:#f01010">0</span><span style="left:1032px">数据积累中</span><span style="left:1135px">智能匹配</span><span style="left:1541px">-</span>
</div>
<div class="row" style="top:484px;background:#fff">
<svg class="abs" style="left:10px;top:5px" width="12" height="12" viewBox="0 0 12 12"><use href="#plus"/></svg>
<span style="left:64px">成都市的开锁公司电话</span><span style="left:377px">20</span><span style="left:448px">本地新增</span><span style="left:539px">启用</span><span style="left:629px">&lt;未设置&gt;</span><span style="left:729px">4.68</span><span style="left:830px">-</span>
<svg class="abs" style="left:927px;top:4px" width="72" height="14" viewBox="0 0 72 14"><use href="#st" transform="translate(0.0,.6) scale(.93)" fill="#fff" stroke="#ced4db" stroke-width="1.100" stroke-linejoin="round"/><use href="#st" transform="translate(13.8,.6) scale(.93)" fill="#fff" stroke="#ced4db" stroke-width="1.100" stroke-linejoin="round"/><use href="#st" transform="translate(27.6,.6) scale(.93)" fill="#fff" stroke="#ced4db" stroke-width="1.100" stroke-linejoin="round"/><use href="#st" transform="translate(41.4,.6) scale(.93)" fill="#fff" stroke="#ced4db" stroke-width="1.100" stroke-linejoin="round"/><use href="#st" transform="translate(55.2,.6) scale(.93)" fill="#fff" stroke="#ced4db" stroke-width="1.100" stroke-linejoin="round"/></svg>
<span style="left:1001px;color:#f01010">0</span><span style="left:1032px">数据积累中</span><span style="left:1135px">智能匹配</span><span style="left:1541px">-</span>
</div>
<div class="row" style="top:506px;background:#f3f6f8">
<svg class="abs" style="left:10px;top:5px" width="12" height="12" viewBox="0 0 12 12"><use href="#plus"/></svg>
<span style="left:64px">成都汽车开锁公司电话</span><span style="left:377px">20</span><span style="left:448px">本地新增</span><span style="left:539px">启用</span><span style="left:629px">&lt;未设置&gt;</span><span style="left:729px">4.68</span><span style="left:830px">-</span>
<svg class="abs" style="left:927px;top:4px" width="72" height="14" viewBox="0 0 72 14"><use href="#st" transform="translate(0.0,.6) scale(.93)" fill="#fff" stroke="#ced4db" stroke-width="1.100" stroke-linejoin="round"/><use href="#st" transform="translate(13.8,.6) scale(.93)" fill="#fff" stroke="#ced4db" stroke-width="1.100" stroke-linejoin="round"/><use href="#st" transform="translate(27.6,.6) scale(.93)" fill="#fff" stroke="#ced4db" stroke-width="1.100" stroke-linejoin="round"/><use href="#st" transform="translate(41.4,.6) scale(.93)" fill="#fff" stroke="#ced4db" stroke-width="1.100" stroke-linejoin="round"/><use href="#st" transform="translate(55.2,.6) scale(.93)" fill="#fff" stroke="#ced4db" stroke-width="1.100" stroke-linejoin="round"/></svg>
<span style="left:1001px;color:#f01010">0</span><span style="left:1032px">数据积累中</span><span style="left:1135px">智能匹配</span><span style="left:1541px">-</span>
</div>
</div>
<div class="abs" style="left:1634px;top:103px;width:17px;height:531px;background:#f1f1f1"></div>
<div class="abs" style="left:1638px;top:111px;width:0;height:0;border-left:4px solid transparent;border-right:4px solid transparent;border-bottom:4px solid #505050"></div>
<div class="abs" style="left:1638px;top:623px;width:0;height:0;border-left:4px solid transparent;border-right:4px solid transparent;border-top:4px solid #505050"></div>
<div class="abs" style="left:1636px;top:123px;width:14px;height:89px;box-sizing:border-box;border:1px solid #979797;border-radius:2px;background:linear-gradient(90deg,#f5f5f5,#e4e4e6 45%,#cfcfd3 55%,#d9d9dc)"></div>
<div class="abs" style="left:1639px;top:163px;width:8px;height:7px;background:repeating-linear-gradient(#5a6068 0 1px,transparent 1px 3px)"></div>
<div class="abs" style="left:0;top:619px;width:1633px;height:15px;background:#f0f0f0"></div>
<div class="abs" style="left:6px;top:622px;width:0;height:0;border-top:4px solid transparent;border-bottom:4px solid transparent;border-right:4px solid #505050"></div>
<div class="abs" style="left:1624px;top:622px;width:0;height:0;border-top:4px solid transparent;border-bottom:4px solid transparent;border-left:4px solid #505050"></div>
<div class="abs" style="left:20px;top:619px;width:1453px;height:14px;box-sizing:border-box;border:1px solid #979797;border-radius:2px;background:linear-gradient(#f7f7f7,#e6e6e8 45%,#d2d2d5 55%,#c9c9cc)"></div>
<div class="abs" style="left:742px;top:623px;width:7px;height:6px;background:repeating-linear-gradient(90deg,#5a6068 0 1px,transparent 1px 3px)"></div>
<div class="abs" style="left:0;top:636px;width:1651px;height:12px;background:linear-gradient(#6787ae 0 1px,#e3e8ee 1px,#dde3ea)"></div>
<div class="abs" style="left:806px;top:636px;width:40px;height:10px;background:#6b84a5"></div>
<div class="abs" style="left:822px;top:639px;width:0;height:0;border-left:4px solid transparent;border-right:4px solid transparent;border-top:4px solid #fff"></div>
<div class="lab" style="left:10px;top:660px;color:#666;">关键词名称：</div>
<div class="inp" style="left:102px;top:657px;width:712px">成都市开锁公司电话24小时上门</div>
<div class="lab" style="left:833px;top:660px;color:#666;">出价：</div>
<svg class="abs" style="left:877px;top:661px" width="12" height="12" viewBox="0 0 12 12"><path d="M3.300 .8h4.400l2.500 2.500v4.400l-2.500 2.500H3.300L.8 7.700V3.300z" fill="#fdf3a0" stroke="#0d4db5" stroke-width="1.200"/><text x="5.500" y="8.700" font-size="8.500" font-weight="bold" text-anchor="middle" fill="#0a0ae8" font-family="Liberation Sans, sans-serif">?</text></svg>
<div class="inp" style="left:892px;top:657px;width:361px">4.68</div>
<div class="lab" style="left:10px;top:689px;color:#666;">移动端落地页链接:</div>
<svg class="abs" style="left:124px;top:691px" width="12" height="12" viewBox="0 0 12 12"><path d="M3.300 .8h4.400l2.500 2.500v4.400l-2.500 2.500H3.300L.8 7.700V3.300z" fill="#fdf3a0" stroke="#0d4db5" stroke-width="1.200"/><text x="5.500" y="8.700" font-size="8.500" font-weight="bold" text-anchor="middle" fill="#0a0ae8" font-family="Liberation Sans, sans-serif">?</text></svg>
<div class="inp ph" style="left:139px;top:687px;width:1036px">&lt;默认&gt;</div>
<svg class="abs" style="left:1182px;top:691px" width="17" height="17" viewBox="0 0 17 17"><path d="M14.500 9.500v6h-13v-13H8" fill="none" stroke="#8c8c8c" stroke-width="1.700"/><path d="M7 10.500L15.500 2M10.500 1.500h5.200v5.200" fill="none" stroke="#8c8c8c" stroke-width="1.700"/></svg>
<div class="lab" style="left:1208px;top:689px;color:#666;">0/1024</div>
<div class="lab" style="left:10px;top:719px;color:#666;">移动监控后缀：</div>
<svg class="abs" style="left:104px;top:720px" width="12" height="12" viewBox="0 0 12 12"><path d="M3.300 .8h4.400l2.500 2.500v4.400l-2.500 2.500H3.300L.8 7.700V3.300z" fill="#fdf3a0" stroke="#0d4db5" stroke-width="1.200"/><text x="5.500" y="8.700" font-size="8.500" font-weight="bold" text-anchor="middle" fill="#0a0ae8" font-family="Liberation Sans, sans-serif">?</text></svg>
<div class="inp ph" style="left:119px;top:716px;width:508px">&lt;请输入移动监控后缀&gt;</div>
<div class="lab" style="left:10px;top:748px;color:#666;">计算机端落地页链接:</div>
<svg class="abs" style="left:134px;top:750px" width="12" height="12" viewBox="0 0 12 12"><path d="M3.300 .8h4.400l2.500 2.500v4.400l-2.500 2.500H3.300L.8 7.700V3.300z" fill="#fdf3a0" stroke="#0d4db5" stroke-width="1.200"/><text x="5.500" y="8.700" font-size="8.500" font-weight="bold" text-anchor="middle" fill="#0a0ae8" font-family="Liberation Sans, sans-serif">?</text></svg>
<div class="inp ph" style="left:149px;top:746px;width:1026px">&lt;默认&gt;</div>
<svg class="abs" style="left:1182px;top:751px" width="17" height="17" viewBox="0 0 17 17"><path d="M14.500 9.500v6h-13v-13H8" fill="none" stroke="#8c8c8c" stroke-width="1.700"/><path d="M7 10.500L15.500 2M10.500 1.500h5.200v5.200" fill="none" stroke="#8c8c8c" stroke-width="1.700"/></svg>
<div class="lab" style="left:1208px;top:748px;color:#666;">0/1024</div>
<div class="lab" style="left:10px;top:781px;color:#666;">计算机监控后缀：</div>
<svg class="abs" style="left:114px;top:781px" width="12" height="12" viewBox="0 0 12 12"><path d="M3.300 .8h4.400l2.500 2.500v4.400l-2.500 2.500H3.300L.8 7.700V3.300z" fill="#fdf3a0" stroke="#0d4db5" stroke-width="1.200"/><text x="5.500" y="8.700" font-size="8.500" font-weight="bold" text-anchor="middle" fill="#0a0ae8" font-family="Liberation Sans, sans-serif">?</text></svg>
<div class="inp ph" style="left:129px;top:776px;width:498px">&lt;请输入计算机监控后缀&gt;</div>
<div class="lab" style="left:10px;top:810px;color:#666;">小程序URL：</div>
<svg class="abs" style="left:94px;top:811px" width="12" height="12" viewBox="0 0 12 12"><path d="M3.300 .8h4.400l2.500 2.500v4.400l-2.500 2.500H3.300L.8 7.700V3.300z" fill="#fdf3a0" stroke="#0d4db5" stroke-width="1.200"/><text x="5.500" y="8.700" font-size="8.500" font-weight="bold" text-anchor="middle" fill="#0a0ae8" font-family="Liberation Sans, sans-serif">?</text></svg>
<div class="inp ph" style="left:109px;top:806px;width:1090px">&lt;请输入URL (选填，非必填)&gt;</div>
<div class="lab" style="left:1208px;top:810px;color:#666;">0/1024</div>
<div class="abs" style="left:1266px;top:654px;width:1px;height:218px;background:#d6d6d6"></div>
<div class="lab" style="left:1275px;top:668px;color:#666;">状态：</div>
<div class="lab" style="left:1318px;top:665px;color:#000;font-weight:bold">本地新增</div>
<div class="lab" style="left:1275px;top:696px;color:#666;">匹配模式：</div>
<div class="lab" style="left:1338px;top:696px;color:#0000ff;">智能匹配</div>
<svg class="abs" style="left:1398px;top:697px" width="12" height="12" viewBox="0 0 12 12"><path d="M3.300 .8h4.400l2.500 2.500v4.400l-2.500 2.500H3.300L.8 7.700V3.300z" fill="#fdf3a0" stroke="#0d4db5" stroke-width="1.200"/><text x="5.500" y="8.700" font-size="8.500" font-weight="bold" text-anchor="middle" fill="#0a0ae8" font-family="Liberation Sans, sans-serif">?</text></svg>
<div class="lab" style="left:1463px;top:670px;color:#666;">标签：</div>
<div class="lab" style="left:1534px;top:669px;color:#000;">未设置</div>
<svg class="abs" style="left:1587px;top:668px" width="12" height="12" viewBox="0 0 12 12"><path d="M3.300 .8h4.400l2.500 2.500v4.400l-2.500 2.500H3.300L.8 7.700V3.300z" fill="#fdf3a0" stroke="#0d4db5" stroke-width="1.200"/><text x="5.500" y="8.700" font-size="8.500" font-weight="bold" text-anchor="middle" fill="#0a0ae8" font-family="Liberation Sans, sans-serif">?</text></svg>
<div class="lab" style="left:1463px;top:702px;color:#666;">启用/暂停：</div>
<div class="abs" style="left:1534px;top:697px;width:81px;height:24px;box-sizing:border-box;border:1px solid #707070;border-radius:3px;background:linear-gradient(#f2f2f2,#ebebeb 50%,#dddddd 51%,#cfcfcf);line-height:22px;padding-left:3px">启用</div>
<div class="dd" style="left:1601px;top:707px;border-top-color:#000;border-width:4px 4px 0 4px"></div>
<div class="lab" style="left:1463px;top:732px;color:#666;">关键词来源：</div>
<div class="lab" style="left:1536px;top:735px;color:#000;">-</div>
<div class="abs" style="left:1456px;top:791px;width:171px;height:29px;box-sizing:border-box;border:1px solid #cdcdcd;background:#fff"></div>
<svg class="abs" style="left:1456px;top:791px" width="171" height="29" viewBox="0 0 171 29">
<circle cx="15.500" cy="14.500" r="10" fill="#fff" stroke="#3c7cf0" stroke-width="2.200"/><text x="15.700" y="17.300" font-size="7.400" font-weight="bold" text-anchor="middle" fill="#3c7cf0" font-family="Liberation Sans, sans-serif">iFLY</text>
<text x="47" y="21" font-size="17.500" font-weight="500" text-anchor="middle" fill="#3c7cf0" font-family="Liberation Sans, Noto Sans CJK SC, sans-serif">中</text>
<circle cx="70.500" cy="11" r="1.900" fill="none" stroke="#3c7cf0" stroke-width="1.800"/><path d="M76 18.200a2.100 2.100 0 1 1 4.100.700c-.3 1.800-1.500 3-3.200 3.500l-.5-.9c1-.4 1.600-1 1.800-1.800a2.100 2.100 0 0 1-2.200-1.500z" fill="#3c7cf0"/>
<rect x="98" y="7" width="6" height="10.500" rx="3" fill="#3c7cf0"/><path d="M95.500 13.500c0 3.500 2.200 5.300 5.500 5.300s5.500-1.800 5.500-5.300M101 19v3.500" fill="none" stroke="#3c7cf0" stroke-width="1.600"/>
<circle cx="128" cy="11.500" r="3.500" fill="#3c7cf0"/><path d="M121.500 22c0-4 3-5.300 6.500-5.300s6.500 1.300 6.500 5.300z" fill="#3c7cf0"/>
<rect x="147.500" y="7.500" width="6.500" height="6.500" fill="#3c7cf0"/><rect x="147.500" y="16" width="6.500" height="6.500" fill="#3c7cf0"/><rect x="156" y="16" width="6.500" height="6.500" fill="#3c7cf0"/><path d="M159.300 6l4 4.300-4 4.300-4-4.300z" fill="#3c7cf0"/>
</svg>
<div class="abs" style="left:1634px;top:648px;width:17px;height:224px;background:#f1f1f1"></div>
<div class="abs" style="left:1638px;top:655px;width:0;height:0;border-left:4px solid transparent;border-right:4px solid transparent;border-bottom:4px solid #505050"></div>
<div class="abs" style="left:1638px;top:865px;width:0;height:0;border-left:4px solid transparent;border-right:4px solid transparent;border-top:4px solid #505050"></div>
<div class="abs" style="left:1636px;top:665px;width:14px;height:99px;box-sizing:border-box;border:1px solid #979797;border-radius:2px;background:linear-gradient(90deg,#f5f5f5,#e4e4e6 45%,#cfcfd3 55%,#d9d9dc)"></div>
<div class="abs" style="left:1639px;top:711px;width:8px;height:7px;background:repeating-linear-gradient(#5a6068 0 1px,transparent 1px 3px)"></div>
</div>
</div></body></html>
